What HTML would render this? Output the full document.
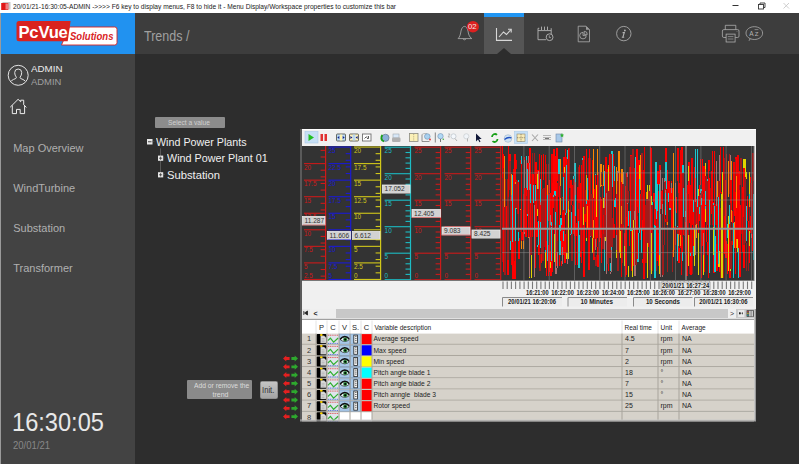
<!DOCTYPE html>
<html><head><meta charset="utf-8">
<style>
*{margin:0;padding:0;box-sizing:border-box}
html,body{width:800px;height:465px;overflow:hidden;background:#fff}
body{position:relative;font-family:"Liberation Sans",sans-serif}
.a{position:absolute}
.t{position:absolute;white-space:nowrap;line-height:1}
svg{position:absolute;left:0;top:0}
</style></head><body>
<div class="a" style="left:0;top:0;width:800px;height:13px;background:#fff"></div>
<div class="t" style="left:12.8px;top:2.77px;font-size:7px;color:#1a1a1a;font-weight:400;transform:scaleX(0.946);transform-origin:0 0;">20/01/21-16:30:05-ADMIN -&gt;&gt;&gt;&gt; F6 key to display menus, F8 to hide it - Menu Display/Workspace properties to customize this bar</div>
<div class="a" style="left:0;top:13px;width:799px;height:451px;background:#2d2d2d"></div>
<div class="a" style="left:0;top:13px;width:799px;height:41px;background:#3d3d3d"></div>
<div class="a" style="left:1px;top:13px;width:133.6px;height:41px;background:#2192f0"></div>
<div class="a" style="left:1px;top:54px;width:133.5px;height:410px;background:#434343"></div>
<div class="a" style="left:0;top:13px;width:1px;height:451px;background:#9a9a9a"></div>
<div class="a" style="left:484px;top:13px;width:40px;height:4px;background:#2196f3"></div>
<div class="a" style="left:484px;top:17px;width:40px;height:37px;background:#555"></div>
<div class="t" style="left:143.5px;top:28.81px;font-size:14.4px;color:#a0a0a0;font-weight:400;transform:scaleX(0.87);transform-origin:0 0;">Trends /</div>
<div class="t" style="left:31px;top:64.37px;font-size:9.6px;color:#ececec;font-weight:400;transform:scaleX(1.02);transform-origin:0 0;">ADMIN</div>
<div class="t" style="left:31px;top:77.47px;font-size:9.6px;color:#a0a0a0;font-weight:400;transform:scaleX(0.98);transform-origin:0 0;">ADMIN</div>
<div class="t" style="left:13.2px;top:142.89px;font-size:11px;color:#b0b0b0;font-weight:400;">Map Overview</div>
<div class="t" style="left:13.2px;top:182.89px;font-size:11px;color:#b0b0b0;font-weight:400;">WindTurbine</div>
<div class="t" style="left:13.2px;top:222.89px;font-size:11px;color:#b0b0b0;font-weight:400;">Substation</div>
<div class="t" style="left:13.2px;top:262.89px;font-size:11px;color:#b0b0b0;font-weight:400;">Transformer</div>
<div class="t" style="left:12.3px;top:409.84px;font-size:25px;color:#e8e8e8;font-weight:400;transform:scaleX(0.945);transform-origin:0 0;">16:30:05</div>
<div class="t" style="left:13px;top:439.87px;font-size:11.5px;color:#888;font-weight:400;transform:scaleX(0.83);transform-origin:0 0;">20/01/21</div>
<div class="a" style="left:154.5px;top:116.5px;width:70px;height:11.5px;background:#8c8c8c;border-radius:1px"></div>
<div class="t" style="left:168px;top:119.07px;font-size:7px;color:#d0d0d0;font-weight:400;transform:scaleX(0.955);transform-origin:0 0;">Select a value</div>
<div class="t" style="left:156px;top:136.69px;font-size:11px;color:#f0f0f0;font-weight:400;transform:scaleX(0.975);transform-origin:0 0;">Wind Power Plants</div>
<div class="t" style="left:167px;top:153.09px;font-size:11px;color:#f0f0f0;font-weight:400;transform:scaleX(0.98);transform-origin:0 0;">Wind Power Plant 01</div>
<div class="t" style="left:166.5px;top:169.69px;font-size:11px;color:#f0f0f0;font-weight:400;transform:scaleX(1.02);transform-origin:0 0;">Substation</div>
<div class="a" style="left:187px;top:380px;width:65px;height:19px;background:#8a8a8a;border-radius:1px"></div>
<div class="t" style="left:193.5px;top:382.07px;font-size:7px;color:#dcdcdc;font-weight:400;transform:scaleX(0.96);transform-origin:0 0;">Add or remove the</div>
<div class="t" style="left:212.5px;top:390.57px;font-size:7px;color:#dcdcdc;font-weight:400;">trend</div>
<div class="a" style="left:260px;top:380.5px;width:18px;height:18.5px;background:linear-gradient(#c4c4c4,#a4a4a4);border:1px solid #909090;border-radius:1.5px"></div>
<div class="t" style="left:261.5px;top:385.80px;font-size:8.5px;color:#333;font-weight:400;transform:scaleX(0.9);transform-origin:0 0;">Init.</div>
<div class="a" style="left:300px;top:129px;width:456px;height:292px;background:#f0f0f0"></div>
<div class="a" style="left:300px;top:129px;width:2px;height:292px;background:#5a5a5a"></div>
<div class="a" style="left:302px;top:146px;width:452px;height:135px;background:#333333"></div>
<div class="a" style="left:302px;top:320px;width:452px;height:100px;background:#d6d2ca"></div>
<svg width="800" height="465" viewBox="0 0 800 465"><line x1="325.6" y1="146" x2="325.6" y2="280.5" stroke="#cc1a1a" stroke-width="1.2"/><line x1="304" y1="279.45" x2="325.6" y2="279.45" stroke="#cc1a1a" stroke-width="1.1"/><line x1="320.6" y1="276.14" x2="325.6" y2="276.14" stroke="#cc1a1a" stroke-width="1.1"/><line x1="320.6" y1="269.52" x2="325.6" y2="269.52" stroke="#cc1a1a" stroke-width="1.1"/><line x1="304" y1="262.90" x2="325.6" y2="262.90" stroke="#cc1a1a" stroke-width="1.1"/><line x1="320.6" y1="256.28" x2="325.6" y2="256.28" stroke="#cc1a1a" stroke-width="1.1"/><line x1="320.6" y1="249.66" x2="325.6" y2="249.66" stroke="#cc1a1a" stroke-width="1.1"/><line x1="304" y1="246.35" x2="325.6" y2="246.35" stroke="#cc1a1a" stroke-width="1.1"/><line x1="320.6" y1="243.04" x2="325.6" y2="243.04" stroke="#cc1a1a" stroke-width="1.1"/><line x1="320.6" y1="236.42" x2="325.6" y2="236.42" stroke="#cc1a1a" stroke-width="1.1"/><line x1="304" y1="229.80" x2="325.6" y2="229.80" stroke="#cc1a1a" stroke-width="1.1"/><line x1="320.6" y1="223.18" x2="325.6" y2="223.18" stroke="#cc1a1a" stroke-width="1.1"/><line x1="320.6" y1="216.56" x2="325.6" y2="216.56" stroke="#cc1a1a" stroke-width="1.1"/><line x1="304" y1="213.25" x2="325.6" y2="213.25" stroke="#cc1a1a" stroke-width="1.1"/><line x1="320.6" y1="209.94" x2="325.6" y2="209.94" stroke="#cc1a1a" stroke-width="1.1"/><line x1="320.6" y1="203.32" x2="325.6" y2="203.32" stroke="#cc1a1a" stroke-width="1.1"/><line x1="304" y1="196.70" x2="325.6" y2="196.70" stroke="#cc1a1a" stroke-width="1.1"/><line x1="320.6" y1="190.08" x2="325.6" y2="190.08" stroke="#cc1a1a" stroke-width="1.1"/><line x1="320.6" y1="183.46" x2="325.6" y2="183.46" stroke="#cc1a1a" stroke-width="1.1"/><line x1="304" y1="180.15" x2="325.6" y2="180.15" stroke="#cc1a1a" stroke-width="1.1"/><line x1="320.6" y1="176.84" x2="325.6" y2="176.84" stroke="#cc1a1a" stroke-width="1.1"/><line x1="320.6" y1="170.22" x2="325.6" y2="170.22" stroke="#cc1a1a" stroke-width="1.1"/><line x1="304" y1="163.60" x2="325.6" y2="163.60" stroke="#cc1a1a" stroke-width="1.1"/><line x1="320.6" y1="156.98" x2="325.6" y2="156.98" stroke="#cc1a1a" stroke-width="1.1"/><line x1="320.6" y1="150.36" x2="325.6" y2="150.36" stroke="#cc1a1a" stroke-width="1.1"/><text x="304" y="169.50" fill="#cc1a1a" font-size="6.4" font-family="Liberation Sans">20</text><text x="304" y="186.05" fill="#cc1a1a" font-size="6.4" font-family="Liberation Sans">17.5</text><text x="304" y="202.60" fill="#cc1a1a" font-size="6.4" font-family="Liberation Sans">15</text><text x="304" y="219.15" fill="#cc1a1a" font-size="6.4" font-family="Liberation Sans">12.5</text><text x="304" y="235.70" fill="#cc1a1a" font-size="6.4" font-family="Liberation Sans">10</text><text x="304" y="252.25" fill="#cc1a1a" font-size="6.4" font-family="Liberation Sans">7.5</text><text x="304" y="268.80" fill="#cc1a1a" font-size="6.4" font-family="Liberation Sans">5</text><text x="304" y="278.00" fill="#cc1a1a" font-size="6.4" font-family="Liberation Sans">2.5</text><line x1="350.7" y1="146" x2="350.7" y2="280.5" stroke="#1a1ad4" stroke-width="1.2"/><line x1="328.5" y1="279.45" x2="350.7" y2="279.45" stroke="#1a1ad4" stroke-width="1.1"/><line x1="345.7" y1="272.83" x2="350.7" y2="272.83" stroke="#1a1ad4" stroke-width="1.1"/><line x1="345.7" y1="266.21" x2="350.7" y2="266.21" stroke="#1a1ad4" stroke-width="1.1"/><line x1="328.5" y1="262.90" x2="350.7" y2="262.90" stroke="#1a1ad4" stroke-width="1.1"/><line x1="345.7" y1="259.59" x2="350.7" y2="259.59" stroke="#1a1ad4" stroke-width="1.1"/><line x1="345.7" y1="252.97" x2="350.7" y2="252.97" stroke="#1a1ad4" stroke-width="1.1"/><line x1="328.5" y1="246.35" x2="350.7" y2="246.35" stroke="#1a1ad4" stroke-width="1.1"/><line x1="345.7" y1="239.73" x2="350.7" y2="239.73" stroke="#1a1ad4" stroke-width="1.1"/><line x1="345.7" y1="233.11" x2="350.7" y2="233.11" stroke="#1a1ad4" stroke-width="1.1"/><line x1="328.5" y1="229.80" x2="350.7" y2="229.80" stroke="#1a1ad4" stroke-width="1.1"/><line x1="345.7" y1="226.49" x2="350.7" y2="226.49" stroke="#1a1ad4" stroke-width="1.1"/><line x1="345.7" y1="219.87" x2="350.7" y2="219.87" stroke="#1a1ad4" stroke-width="1.1"/><line x1="328.5" y1="213.25" x2="350.7" y2="213.25" stroke="#1a1ad4" stroke-width="1.1"/><line x1="345.7" y1="206.63" x2="350.7" y2="206.63" stroke="#1a1ad4" stroke-width="1.1"/><line x1="345.7" y1="200.01" x2="350.7" y2="200.01" stroke="#1a1ad4" stroke-width="1.1"/><line x1="328.5" y1="196.70" x2="350.7" y2="196.70" stroke="#1a1ad4" stroke-width="1.1"/><line x1="345.7" y1="193.39" x2="350.7" y2="193.39" stroke="#1a1ad4" stroke-width="1.1"/><line x1="345.7" y1="186.77" x2="350.7" y2="186.77" stroke="#1a1ad4" stroke-width="1.1"/><line x1="328.5" y1="180.15" x2="350.7" y2="180.15" stroke="#1a1ad4" stroke-width="1.1"/><line x1="345.7" y1="173.53" x2="350.7" y2="173.53" stroke="#1a1ad4" stroke-width="1.1"/><line x1="345.7" y1="166.91" x2="350.7" y2="166.91" stroke="#1a1ad4" stroke-width="1.1"/><line x1="328.5" y1="163.60" x2="350.7" y2="163.60" stroke="#1a1ad4" stroke-width="1.1"/><line x1="345.7" y1="160.29" x2="350.7" y2="160.29" stroke="#1a1ad4" stroke-width="1.1"/><line x1="345.7" y1="153.67" x2="350.7" y2="153.67" stroke="#1a1ad4" stroke-width="1.1"/><line x1="328.5" y1="147.05" x2="350.7" y2="147.05" stroke="#1a1ad4" stroke-width="1.1"/><text x="328.5" y="152.95" fill="#1a1ad4" font-size="6.4" font-family="Liberation Sans">25</text><text x="328.5" y="169.50" fill="#1a1ad4" font-size="6.4" font-family="Liberation Sans">22.5</text><text x="328.5" y="186.05" fill="#1a1ad4" font-size="6.4" font-family="Liberation Sans">20</text><text x="328.5" y="202.60" fill="#1a1ad4" font-size="6.4" font-family="Liberation Sans">17.5</text><text x="328.5" y="219.15" fill="#1a1ad4" font-size="6.4" font-family="Liberation Sans">15</text><text x="328.5" y="235.70" fill="#1a1ad4" font-size="6.4" font-family="Liberation Sans">12.5</text><text x="328.5" y="252.25" fill="#1a1ad4" font-size="6.4" font-family="Liberation Sans">10</text><text x="328.5" y="268.80" fill="#1a1ad4" font-size="6.4" font-family="Liberation Sans">7.5</text><text x="328.5" y="278.00" fill="#1a1ad4" font-size="6.4" font-family="Liberation Sans">5</text><line x1="380.6" y1="146" x2="380.6" y2="280.5" stroke="#d2c81a" stroke-width="1.2"/><line x1="354" y1="279.45" x2="380.6" y2="279.45" stroke="#d2c81a" stroke-width="1.1"/><line x1="375.6" y1="272.83" x2="380.6" y2="272.83" stroke="#d2c81a" stroke-width="1.1"/><line x1="375.6" y1="266.21" x2="380.6" y2="266.21" stroke="#d2c81a" stroke-width="1.1"/><line x1="354" y1="262.90" x2="380.6" y2="262.90" stroke="#d2c81a" stroke-width="1.1"/><line x1="375.6" y1="259.59" x2="380.6" y2="259.59" stroke="#d2c81a" stroke-width="1.1"/><line x1="375.6" y1="252.97" x2="380.6" y2="252.97" stroke="#d2c81a" stroke-width="1.1"/><line x1="354" y1="246.35" x2="380.6" y2="246.35" stroke="#d2c81a" stroke-width="1.1"/><line x1="375.6" y1="239.73" x2="380.6" y2="239.73" stroke="#d2c81a" stroke-width="1.1"/><line x1="375.6" y1="233.11" x2="380.6" y2="233.11" stroke="#d2c81a" stroke-width="1.1"/><line x1="354" y1="229.80" x2="380.6" y2="229.80" stroke="#d2c81a" stroke-width="1.1"/><line x1="375.6" y1="226.49" x2="380.6" y2="226.49" stroke="#d2c81a" stroke-width="1.1"/><line x1="375.6" y1="219.87" x2="380.6" y2="219.87" stroke="#d2c81a" stroke-width="1.1"/><line x1="354" y1="213.25" x2="380.6" y2="213.25" stroke="#d2c81a" stroke-width="1.1"/><line x1="375.6" y1="206.63" x2="380.6" y2="206.63" stroke="#d2c81a" stroke-width="1.1"/><line x1="375.6" y1="200.01" x2="380.6" y2="200.01" stroke="#d2c81a" stroke-width="1.1"/><line x1="354" y1="196.70" x2="380.6" y2="196.70" stroke="#d2c81a" stroke-width="1.1"/><line x1="375.6" y1="193.39" x2="380.6" y2="193.39" stroke="#d2c81a" stroke-width="1.1"/><line x1="375.6" y1="186.77" x2="380.6" y2="186.77" stroke="#d2c81a" stroke-width="1.1"/><line x1="354" y1="180.15" x2="380.6" y2="180.15" stroke="#d2c81a" stroke-width="1.1"/><line x1="375.6" y1="173.53" x2="380.6" y2="173.53" stroke="#d2c81a" stroke-width="1.1"/><line x1="375.6" y1="166.91" x2="380.6" y2="166.91" stroke="#d2c81a" stroke-width="1.1"/><line x1="354" y1="163.60" x2="380.6" y2="163.60" stroke="#d2c81a" stroke-width="1.1"/><line x1="375.6" y1="160.29" x2="380.6" y2="160.29" stroke="#d2c81a" stroke-width="1.1"/><line x1="375.6" y1="153.67" x2="380.6" y2="153.67" stroke="#d2c81a" stroke-width="1.1"/><line x1="354" y1="147.05" x2="380.6" y2="147.05" stroke="#d2c81a" stroke-width="1.1"/><text x="354" y="152.95" fill="#d2c81a" font-size="6.4" font-family="Liberation Sans">20</text><text x="354" y="169.50" fill="#d2c81a" font-size="6.4" font-family="Liberation Sans">17.5</text><text x="354" y="186.05" fill="#d2c81a" font-size="6.4" font-family="Liberation Sans">15</text><text x="354" y="202.60" fill="#d2c81a" font-size="6.4" font-family="Liberation Sans">12.5</text><text x="354" y="219.15" fill="#d2c81a" font-size="6.4" font-family="Liberation Sans">10</text><text x="354" y="235.70" fill="#d2c81a" font-size="6.4" font-family="Liberation Sans">7.5</text><text x="354" y="252.25" fill="#d2c81a" font-size="6.4" font-family="Liberation Sans">5</text><text x="354" y="268.80" fill="#d2c81a" font-size="6.4" font-family="Liberation Sans">2.5</text><text x="354" y="278.00" fill="#d2c81a" font-size="6.4" font-family="Liberation Sans">0</text><line x1="410.5" y1="146" x2="410.5" y2="280.5" stroke="#1cbcc4" stroke-width="1.2"/><line x1="384.6" y1="279.70" x2="410.5" y2="279.70" stroke="#1cbcc4" stroke-width="1.1"/><line x1="405.5" y1="274.40" x2="410.5" y2="274.40" stroke="#1cbcc4" stroke-width="1.1"/><line x1="405.5" y1="269.10" x2="410.5" y2="269.10" stroke="#1cbcc4" stroke-width="1.1"/><line x1="405.5" y1="263.80" x2="410.5" y2="263.80" stroke="#1cbcc4" stroke-width="1.1"/><line x1="405.5" y1="258.50" x2="410.5" y2="258.50" stroke="#1cbcc4" stroke-width="1.1"/><line x1="384.6" y1="253.20" x2="410.5" y2="253.20" stroke="#1cbcc4" stroke-width="1.1"/><line x1="405.5" y1="247.90" x2="410.5" y2="247.90" stroke="#1cbcc4" stroke-width="1.1"/><line x1="405.5" y1="242.60" x2="410.5" y2="242.60" stroke="#1cbcc4" stroke-width="1.1"/><line x1="405.5" y1="237.30" x2="410.5" y2="237.30" stroke="#1cbcc4" stroke-width="1.1"/><line x1="405.5" y1="232.00" x2="410.5" y2="232.00" stroke="#1cbcc4" stroke-width="1.1"/><line x1="384.6" y1="226.70" x2="410.5" y2="226.70" stroke="#1cbcc4" stroke-width="1.1"/><line x1="405.5" y1="221.40" x2="410.5" y2="221.40" stroke="#1cbcc4" stroke-width="1.1"/><line x1="405.5" y1="216.10" x2="410.5" y2="216.10" stroke="#1cbcc4" stroke-width="1.1"/><line x1="405.5" y1="210.80" x2="410.5" y2="210.80" stroke="#1cbcc4" stroke-width="1.1"/><line x1="405.5" y1="205.50" x2="410.5" y2="205.50" stroke="#1cbcc4" stroke-width="1.1"/><line x1="384.6" y1="200.20" x2="410.5" y2="200.20" stroke="#1cbcc4" stroke-width="1.1"/><line x1="405.5" y1="194.90" x2="410.5" y2="194.90" stroke="#1cbcc4" stroke-width="1.1"/><line x1="405.5" y1="189.60" x2="410.5" y2="189.60" stroke="#1cbcc4" stroke-width="1.1"/><line x1="405.5" y1="184.30" x2="410.5" y2="184.30" stroke="#1cbcc4" stroke-width="1.1"/><line x1="405.5" y1="179.00" x2="410.5" y2="179.00" stroke="#1cbcc4" stroke-width="1.1"/><line x1="384.6" y1="173.70" x2="410.5" y2="173.70" stroke="#1cbcc4" stroke-width="1.1"/><line x1="405.5" y1="168.40" x2="410.5" y2="168.40" stroke="#1cbcc4" stroke-width="1.1"/><line x1="405.5" y1="163.10" x2="410.5" y2="163.10" stroke="#1cbcc4" stroke-width="1.1"/><line x1="405.5" y1="157.80" x2="410.5" y2="157.80" stroke="#1cbcc4" stroke-width="1.1"/><line x1="405.5" y1="152.50" x2="410.5" y2="152.50" stroke="#1cbcc4" stroke-width="1.1"/><line x1="384.6" y1="147.20" x2="410.5" y2="147.20" stroke="#1cbcc4" stroke-width="1.1"/><text x="384.6" y="153.10" fill="#1cbcc4" font-size="6.4" font-family="Liberation Sans">25</text><text x="384.6" y="179.60" fill="#1cbcc4" font-size="6.4" font-family="Liberation Sans">20</text><text x="384.6" y="206.10" fill="#1cbcc4" font-size="6.4" font-family="Liberation Sans">15</text><text x="384.6" y="232.60" fill="#1cbcc4" font-size="6.4" font-family="Liberation Sans">10</text><text x="384.6" y="259.10" fill="#1cbcc4" font-size="6.4" font-family="Liberation Sans">5</text><text x="384.6" y="278.00" fill="#1cbcc4" font-size="6.4" font-family="Liberation Sans">0</text><line x1="440.6" y1="146" x2="440.6" y2="280.5" stroke="#cc1a1a" stroke-width="1.2"/><line x1="414.5" y1="279.70" x2="440.6" y2="279.70" stroke="#cc1a1a" stroke-width="1.1"/><line x1="435.6" y1="274.40" x2="440.6" y2="274.40" stroke="#cc1a1a" stroke-width="1.1"/><line x1="435.6" y1="269.10" x2="440.6" y2="269.10" stroke="#cc1a1a" stroke-width="1.1"/><line x1="435.6" y1="263.80" x2="440.6" y2="263.80" stroke="#cc1a1a" stroke-width="1.1"/><line x1="435.6" y1="258.50" x2="440.6" y2="258.50" stroke="#cc1a1a" stroke-width="1.1"/><line x1="414.5" y1="253.20" x2="440.6" y2="253.20" stroke="#cc1a1a" stroke-width="1.1"/><line x1="435.6" y1="247.90" x2="440.6" y2="247.90" stroke="#cc1a1a" stroke-width="1.1"/><line x1="435.6" y1="242.60" x2="440.6" y2="242.60" stroke="#cc1a1a" stroke-width="1.1"/><line x1="435.6" y1="237.30" x2="440.6" y2="237.30" stroke="#cc1a1a" stroke-width="1.1"/><line x1="435.6" y1="232.00" x2="440.6" y2="232.00" stroke="#cc1a1a" stroke-width="1.1"/><line x1="414.5" y1="226.70" x2="440.6" y2="226.70" stroke="#cc1a1a" stroke-width="1.1"/><line x1="435.6" y1="221.40" x2="440.6" y2="221.40" stroke="#cc1a1a" stroke-width="1.1"/><line x1="435.6" y1="216.10" x2="440.6" y2="216.10" stroke="#cc1a1a" stroke-width="1.1"/><line x1="435.6" y1="210.80" x2="440.6" y2="210.80" stroke="#cc1a1a" stroke-width="1.1"/><line x1="435.6" y1="205.50" x2="440.6" y2="205.50" stroke="#cc1a1a" stroke-width="1.1"/><line x1="414.5" y1="200.20" x2="440.6" y2="200.20" stroke="#cc1a1a" stroke-width="1.1"/><line x1="435.6" y1="194.90" x2="440.6" y2="194.90" stroke="#cc1a1a" stroke-width="1.1"/><line x1="435.6" y1="189.60" x2="440.6" y2="189.60" stroke="#cc1a1a" stroke-width="1.1"/><line x1="435.6" y1="184.30" x2="440.6" y2="184.30" stroke="#cc1a1a" stroke-width="1.1"/><line x1="435.6" y1="179.00" x2="440.6" y2="179.00" stroke="#cc1a1a" stroke-width="1.1"/><line x1="414.5" y1="173.70" x2="440.6" y2="173.70" stroke="#cc1a1a" stroke-width="1.1"/><line x1="435.6" y1="168.40" x2="440.6" y2="168.40" stroke="#cc1a1a" stroke-width="1.1"/><line x1="435.6" y1="163.10" x2="440.6" y2="163.10" stroke="#cc1a1a" stroke-width="1.1"/><line x1="435.6" y1="157.80" x2="440.6" y2="157.80" stroke="#cc1a1a" stroke-width="1.1"/><line x1="435.6" y1="152.50" x2="440.6" y2="152.50" stroke="#cc1a1a" stroke-width="1.1"/><line x1="414.5" y1="147.20" x2="440.6" y2="147.20" stroke="#cc1a1a" stroke-width="1.1"/><text x="414.5" y="153.10" fill="#cc1a1a" font-size="6.4" font-family="Liberation Sans">25</text><text x="414.5" y="179.60" fill="#cc1a1a" font-size="6.4" font-family="Liberation Sans">20</text><text x="414.5" y="206.10" fill="#cc1a1a" font-size="6.4" font-family="Liberation Sans">15</text><text x="414.5" y="232.60" fill="#cc1a1a" font-size="6.4" font-family="Liberation Sans">10</text><text x="414.5" y="259.10" fill="#cc1a1a" font-size="6.4" font-family="Liberation Sans">5</text><text x="414.5" y="278.00" fill="#cc1a1a" font-size="6.4" font-family="Liberation Sans">0</text><line x1="470.7" y1="146" x2="470.7" y2="280.5" stroke="#cc1a1a" stroke-width="1.2"/><line x1="444.5" y1="279.70" x2="470.7" y2="279.70" stroke="#cc1a1a" stroke-width="1.1"/><line x1="465.7" y1="274.40" x2="470.7" y2="274.40" stroke="#cc1a1a" stroke-width="1.1"/><line x1="465.7" y1="269.10" x2="470.7" y2="269.10" stroke="#cc1a1a" stroke-width="1.1"/><line x1="465.7" y1="263.80" x2="470.7" y2="263.80" stroke="#cc1a1a" stroke-width="1.1"/><line x1="465.7" y1="258.50" x2="470.7" y2="258.50" stroke="#cc1a1a" stroke-width="1.1"/><line x1="444.5" y1="253.20" x2="470.7" y2="253.20" stroke="#cc1a1a" stroke-width="1.1"/><line x1="465.7" y1="247.90" x2="470.7" y2="247.90" stroke="#cc1a1a" stroke-width="1.1"/><line x1="465.7" y1="242.60" x2="470.7" y2="242.60" stroke="#cc1a1a" stroke-width="1.1"/><line x1="465.7" y1="237.30" x2="470.7" y2="237.30" stroke="#cc1a1a" stroke-width="1.1"/><line x1="465.7" y1="232.00" x2="470.7" y2="232.00" stroke="#cc1a1a" stroke-width="1.1"/><line x1="444.5" y1="226.70" x2="470.7" y2="226.70" stroke="#cc1a1a" stroke-width="1.1"/><line x1="465.7" y1="221.40" x2="470.7" y2="221.40" stroke="#cc1a1a" stroke-width="1.1"/><line x1="465.7" y1="216.10" x2="470.7" y2="216.10" stroke="#cc1a1a" stroke-width="1.1"/><line x1="465.7" y1="210.80" x2="470.7" y2="210.80" stroke="#cc1a1a" stroke-width="1.1"/><line x1="465.7" y1="205.50" x2="470.7" y2="205.50" stroke="#cc1a1a" stroke-width="1.1"/><line x1="444.5" y1="200.20" x2="470.7" y2="200.20" stroke="#cc1a1a" stroke-width="1.1"/><line x1="465.7" y1="194.90" x2="470.7" y2="194.90" stroke="#cc1a1a" stroke-width="1.1"/><line x1="465.7" y1="189.60" x2="470.7" y2="189.60" stroke="#cc1a1a" stroke-width="1.1"/><line x1="465.7" y1="184.30" x2="470.7" y2="184.30" stroke="#cc1a1a" stroke-width="1.1"/><line x1="465.7" y1="179.00" x2="470.7" y2="179.00" stroke="#cc1a1a" stroke-width="1.1"/><line x1="444.5" y1="173.70" x2="470.7" y2="173.70" stroke="#cc1a1a" stroke-width="1.1"/><line x1="465.7" y1="168.40" x2="470.7" y2="168.40" stroke="#cc1a1a" stroke-width="1.1"/><line x1="465.7" y1="163.10" x2="470.7" y2="163.10" stroke="#cc1a1a" stroke-width="1.1"/><line x1="465.7" y1="157.80" x2="470.7" y2="157.80" stroke="#cc1a1a" stroke-width="1.1"/><line x1="465.7" y1="152.50" x2="470.7" y2="152.50" stroke="#cc1a1a" stroke-width="1.1"/><line x1="444.5" y1="147.20" x2="470.7" y2="147.20" stroke="#cc1a1a" stroke-width="1.1"/><text x="444.5" y="153.10" fill="#cc1a1a" font-size="6.4" font-family="Liberation Sans">25</text><text x="444.5" y="179.60" fill="#cc1a1a" font-size="6.4" font-family="Liberation Sans">20</text><text x="444.5" y="206.10" fill="#cc1a1a" font-size="6.4" font-family="Liberation Sans">15</text><text x="444.5" y="232.60" fill="#cc1a1a" font-size="6.4" font-family="Liberation Sans">10</text><text x="444.5" y="259.10" fill="#cc1a1a" font-size="6.4" font-family="Liberation Sans">5</text><text x="444.5" y="278.00" fill="#cc1a1a" font-size="6.4" font-family="Liberation Sans">0</text><line x1="500.7" y1="146" x2="500.7" y2="280.5" stroke="#cc1a1a" stroke-width="1.2"/><line x1="474.5" y1="279.70" x2="500.7" y2="279.70" stroke="#cc1a1a" stroke-width="1.1"/><line x1="495.7" y1="274.40" x2="500.7" y2="274.40" stroke="#cc1a1a" stroke-width="1.1"/><line x1="495.7" y1="269.10" x2="500.7" y2="269.10" stroke="#cc1a1a" stroke-width="1.1"/><line x1="495.7" y1="263.80" x2="500.7" y2="263.80" stroke="#cc1a1a" stroke-width="1.1"/><line x1="495.7" y1="258.50" x2="500.7" y2="258.50" stroke="#cc1a1a" stroke-width="1.1"/><line x1="474.5" y1="253.20" x2="500.7" y2="253.20" stroke="#cc1a1a" stroke-width="1.1"/><line x1="495.7" y1="247.90" x2="500.7" y2="247.90" stroke="#cc1a1a" stroke-width="1.1"/><line x1="495.7" y1="242.60" x2="500.7" y2="242.60" stroke="#cc1a1a" stroke-width="1.1"/><line x1="495.7" y1="237.30" x2="500.7" y2="237.30" stroke="#cc1a1a" stroke-width="1.1"/><line x1="495.7" y1="232.00" x2="500.7" y2="232.00" stroke="#cc1a1a" stroke-width="1.1"/><line x1="474.5" y1="226.70" x2="500.7" y2="226.70" stroke="#cc1a1a" stroke-width="1.1"/><line x1="495.7" y1="221.40" x2="500.7" y2="221.40" stroke="#cc1a1a" stroke-width="1.1"/><line x1="495.7" y1="216.10" x2="500.7" y2="216.10" stroke="#cc1a1a" stroke-width="1.1"/><line x1="495.7" y1="210.80" x2="500.7" y2="210.80" stroke="#cc1a1a" stroke-width="1.1"/><line x1="495.7" y1="205.50" x2="500.7" y2="205.50" stroke="#cc1a1a" stroke-width="1.1"/><line x1="474.5" y1="200.20" x2="500.7" y2="200.20" stroke="#cc1a1a" stroke-width="1.1"/><line x1="495.7" y1="194.90" x2="500.7" y2="194.90" stroke="#cc1a1a" stroke-width="1.1"/><line x1="495.7" y1="189.60" x2="500.7" y2="189.60" stroke="#cc1a1a" stroke-width="1.1"/><line x1="495.7" y1="184.30" x2="500.7" y2="184.30" stroke="#cc1a1a" stroke-width="1.1"/><line x1="495.7" y1="179.00" x2="500.7" y2="179.00" stroke="#cc1a1a" stroke-width="1.1"/><line x1="474.5" y1="173.70" x2="500.7" y2="173.70" stroke="#cc1a1a" stroke-width="1.1"/><line x1="495.7" y1="168.40" x2="500.7" y2="168.40" stroke="#cc1a1a" stroke-width="1.1"/><line x1="495.7" y1="163.10" x2="500.7" y2="163.10" stroke="#cc1a1a" stroke-width="1.1"/><line x1="495.7" y1="157.80" x2="500.7" y2="157.80" stroke="#cc1a1a" stroke-width="1.1"/><line x1="495.7" y1="152.50" x2="500.7" y2="152.50" stroke="#cc1a1a" stroke-width="1.1"/><line x1="474.5" y1="147.20" x2="500.7" y2="147.20" stroke="#cc1a1a" stroke-width="1.1"/><text x="474.5" y="153.10" fill="#cc1a1a" font-size="6.4" font-family="Liberation Sans">25</text><text x="474.5" y="179.60" fill="#cc1a1a" font-size="6.4" font-family="Liberation Sans">20</text><text x="474.5" y="206.10" fill="#cc1a1a" font-size="6.4" font-family="Liberation Sans">15</text><text x="474.5" y="232.60" fill="#cc1a1a" font-size="6.4" font-family="Liberation Sans">10</text><text x="474.5" y="259.10" fill="#cc1a1a" font-size="6.4" font-family="Liberation Sans">5</text><text x="474.5" y="278.00" fill="#cc1a1a" font-size="6.4" font-family="Liberation Sans">0</text><path d="M503.5,220V224M504.5,224V230M506.5,206V230M507.5,206V275M508.5,167V275M509.5,154V167M510.5,154V179M511.5,179V215M512.5,215V234M513.5,234V279M515.5,180V279M516.5,180V199M518.5,199V259M519.5,238V259M521.5,238V240M522.5,232V240M524.5,157V232M526.5,157V206M527.5,163V206M528.5,163V188M529.5,188V253M530.5,174V253M531.5,174V231M532.5,174V231M533.5,174V190M534.5,190V191M535.5,191V195M536.5,195V210M537.5,170V210M538.5,170V255M539.5,255V258M540.5,258V263M541.5,155V263M543.5,155V180M545.5,180V206M546.5,206V240M547.5,221V240M548.5,180V221M549.5,180V193M550.5,193V276M551.5,224V276M552.5,208V224M553.5,149V208M554.5,149V243M555.5,156V243M556.5,156V266M557.5,252V266M559.5,252V266M561.5,261V266M562.5,197V261M563.5,157V197M564.5,157V263M565.5,234V263M566.5,157V234M568.5,157V210M569.5,210V212M570.5,180V212M571.5,180V205M572.5,205V234M573.5,189V234M574.5,189V228M577.5,188V228M578.5,188V257M580.5,183V257M581.5,183V183M582.5,183V220M583.5,220V277M584.5,206V277M585.5,206V222M586.5,149V222M587.5,149V149M589.5,149V191M590.5,191V233M593.5,189V233M594.5,189V241M595.5,215V241M596.5,215V247M597.5,247V267M598.5,242V267M599.5,229V242M601.5,229V263M604.5,173V263M605.5,173V231M606.5,231V271M608.5,189V271M611.5,189V212M613.5,204V212M615.5,204V208M616.5,208V242M618.5,212V242M620.5,200V212M621.5,200V216M623.5,216V228M625.5,228V275M626.5,173V275M627.5,173V226M628.5,215V226M629.5,215V221M630.5,155V221M631.5,155V271M632.5,163V271M633.5,163V266M634.5,200V266M636.5,149V200M637.5,149V213M638.5,160V213M639.5,160V197M640.5,197V204M641.5,192V204M642.5,192V231M643.5,227V231M645.5,227V254M647.5,222V254M650.5,212V222M651.5,202V212M653.5,193V202M654.5,193V267M656.5,247V267M657.5,171V247M658.5,171V185M659.5,165V185M660.5,165V268M662.5,240V268M664.5,215V240M665.5,148V215M666.5,148V170M667.5,170V200M668.5,181V200M671.5,181V230M672.5,213V230M675.5,213V245M678.5,245V263M679.5,248V263M680.5,155V248M681.5,147V155M682.5,147V229M683.5,229V235M684.5,222V235M685.5,222V255M686.5,255V276M687.5,244V276M688.5,162V244M689.5,162V223M690.5,223V275M691.5,231V275M693.5,231V247M694.5,167V247M695.5,167V220M696.5,202V220M697.5,195V202M698.5,195V221M699.5,185V221M700.5,159V185M702.5,159V246M703.5,246V272M704.5,203V272M705.5,178V203M706.5,178V242M707.5,242V255M708.5,218V255M709.5,189V218M710.5,189V207M711.5,202V207M713.5,202V273M714.5,213V273M716.5,210V213M717.5,210V230M719.5,230V272M721.5,192V272M722.5,187V192M723.5,187V219M724.5,192V219M725.5,192V258M726.5,241V258M728.5,217V241M729.5,217V278M730.5,245V278M732.5,211V245M733.5,211V216M734.5,203V216M735.5,157V203M736.5,157V238M737.5,218V238M738.5,218V231M742.5,187V231M743.5,187V268M744.5,194V268M745.5,194V196M747.5,196V221M748.5,221V263M749.5,216V263M750.5,216V233M752.5,233V251M753.5,251V255" fill="none" stroke="#ff0000" stroke-width="1" shape-rendering="crispEdges"/><path d="M504.5,198V232M529.5,232V278M531.5,194V278M533.5,194V197M535.5,197V216M537.5,174V216M538.5,174V226M539.5,177V226M545.5,177V268M550.5,262V268M554.5,234V262M555.5,203V234M559.5,185V203M564.5,167V185M566.5,167V259M568.5,201V259M578.5,175V201M581.5,175V188M583.5,188V225M586.5,225V241M589.5,210V241M592.5,210V253M593.5,185V253M596.5,185V217M597.5,217V217M603.5,198V217M605.5,198V241M606.5,166V241M608.5,166V203M616.5,203V258M620.5,213V258M621.5,213V233M624.5,233V266M628.5,266V277M632.5,230V277M633.5,201V230M639.5,165V201M644.5,165V278M647.5,185V278M649.5,185V257M650.5,157V257M651.5,157V274M659.5,187V274M662.5,182V187M666.5,166V182M688.5,166V266M694.5,210V266M696.5,210V216M697.5,189V216M698.5,189V275M703.5,222V275M705.5,163V222M708.5,163V188M709.5,188V255M713.5,227V255M718.5,227V267M719.5,194V267M721.5,194V278M722.5,172V278M724.5,172V216M728.5,216V271M730.5,214V271M731.5,206V214M737.5,206V252M738.5,159V252M743.5,159V185M744.5,159V185M745.5,159V179M746.5,172V179M749.5,172V246M753.5,232V246" fill="none" stroke="#e0d400" stroke-width="1" shape-rendering="crispEdges"/><path d="M508.5,168V242M510.5,168V250M512.5,175V250M515.5,175V241M518.5,180V241M521.5,156V180M526.5,156V169M527.5,169V216M528.5,158V216M530.5,158V203M533.5,185V203M535.5,185V247M537.5,245V247M538.5,215V245M539.5,179V215M540.5,179V248M542.5,199V248M545.5,199V252M546.5,193V252M547.5,193V261M551.5,197V261M553.5,195V197M554.5,191V195M555.5,191V257M557.5,197V257M558.5,159V197M559.5,159V255M560.5,218V255M561.5,218V242M563.5,177V242M565.5,177V215M566.5,165V215M567.5,150V165M568.5,150V191M570.5,191V235M571.5,212V235M573.5,176V212M574.5,163V176M575.5,163V221M578.5,221V268M579.5,235V268M582.5,158V235M584.5,158V193M586.5,193V204M587.5,178V204M588.5,178V184M593.5,174V184M595.5,174V224M597.5,171V224M600.5,171V171M604.5,171V271M610.5,263V271M611.5,151V263M612.5,151V187M613.5,166V187M614.5,166V207M615.5,198V207M616.5,198V232M622.5,226V232M628.5,211V226M630.5,211V231M631.5,179V231M633.5,157V179M635.5,157V249M637.5,249V262M638.5,233V262M639.5,179V233M641.5,179V253M649.5,206V253M650.5,206V248M652.5,202V248M654.5,202V278M655.5,162V278M656.5,162V261M657.5,184V261M659.5,184V255M660.5,238V255M662.5,219V238M664.5,215V219M665.5,162V215M666.5,162V193M668.5,193V202M669.5,202V210M670.5,190V210M672.5,190V210M675.5,210V226M677.5,226V261M682.5,165V261M683.5,165V217M685.5,211V217M690.5,211V256M693.5,200V256M695.5,149V200M697.5,149V214M699.5,193V214M700.5,189V193M701.5,189V209M705.5,179V209M707.5,179V200M708.5,200V273M709.5,189V273M711.5,189V203M713.5,203V205M714.5,205V272M715.5,236V272M716.5,196V236M718.5,196V264M723.5,238V264M727.5,224V238M729.5,205V224M733.5,205V278M735.5,278V278M738.5,211V278M739.5,211V232M745.5,232V241M746.5,206V241M749.5,194V206M753.5,194V260" fill="none" stroke="#18c8d0" stroke-width="1" shape-rendering="crispEdges"/><path d="M504.5,156V220M508.5,156V229M511.5,174V229M515.5,174V204M516.5,204V209M520.5,209V224M521.5,224V249M523.5,238V249M528.5,203V238M536.5,185V203M547.5,185V195M552.5,195V215M560.5,159V215M568.5,159V209M582.5,200V209M584.5,175V200M586.5,175V201M587.5,201V229M593.5,149V229M597.5,149V218M598.5,187V218M600.5,164V187M601.5,164V186M603.5,165V186M608.5,165V167M616.5,167V249M618.5,151V249M619.5,151V253M621.5,169V253M622.5,169V190M640.5,155V190M644.5,155V192M646.5,192V211M647.5,211V211M660.5,181V211M667.5,181V257M673.5,153V257M678.5,153V246M680.5,202V246M684.5,202V205M689.5,200V205M690.5,200V235M692.5,230V235M695.5,230V238M696.5,209V238M697.5,209V216M703.5,169V216M705.5,169V181M717.5,181V233M719.5,197V233M728.5,161V197M731.5,161V222M734.5,222V248M736.5,176V248M737.5,176V227M738.5,224V227M749.5,199V224M752.5,183V199" fill="none" stroke="#ff8800" stroke-width="1" shape-rendering="crispEdges"/><path d="M502.5,238V260M511.5,195V260M523.5,195V234M524.5,160V234M526.5,160V188M528.5,156V188M529.5,156V277M534.5,171V277M538.5,171V202M540.5,202V221M543.5,215V221M550.5,215V225M555.5,225V274M556.5,268V274M557.5,247V268M562.5,247V264M567.5,182V264M575.5,182V195M584.5,189V195M589.5,179V189M590.5,179V237M595.5,237V250M604.5,197V250M605.5,166V197M606.5,166V274M610.5,272V274M611.5,250V272M616.5,214V250M617.5,171V214M618.5,171V217M623.5,172V217M627.5,172V204M634.5,204V276M635.5,200V276M636.5,200V207M637.5,207V214M641.5,170V214M660.5,170V277M662.5,178V277M664.5,178V184M665.5,184V193M671.5,183V193M675.5,183V211M680.5,178V211M695.5,178V255M703.5,187V255M706.5,187V192M712.5,161V192M716.5,161V247M719.5,155V247M730.5,155V215M737.5,215V238M751.5,218V238" fill="none" stroke="#a87070" stroke-width="1" shape-rendering="crispEdges"/><path d="M502.5,154V198M503.5,154V272M505.5,193V272M507.5,193V242M512.5,242V279M514.5,154V279M515.5,154V182M518.5,182V232M521.5,232V241M523.5,210V241M524.5,210V212M526.5,212V237M528.5,163V237M529.5,148V163M530.5,148V184M535.5,162V184M536.5,162V237M537.5,222V237M540.5,205V222M541.5,201V205M542.5,201V207M546.5,207V276M548.5,245V276M549.5,245V272M552.5,176V272M556.5,148V176M557.5,148V181M559.5,181V225M561.5,225V255M563.5,241V255M567.5,221V241M570.5,189V221M573.5,189V216M575.5,216V265M577.5,202V265M578.5,202V207M583.5,156V207M584.5,156V238M586.5,206V238M587.5,200V206M588.5,200V270M589.5,160V270M592.5,160V238M593.5,238V260M594.5,239V260M595.5,175V239M597.5,175V238M600.5,197V238M602.5,197V230M605.5,207V230M608.5,207V209M609.5,154V209M613.5,154V235M616.5,194V235M617.5,194V237M618.5,184V237M620.5,182V184M621.5,182V206M622.5,206V233M624.5,233V246M629.5,211V246M634.5,168V211M637.5,168V259M642.5,259V263M646.5,247V263M648.5,215V247M650.5,148V215M651.5,148V196M654.5,196V225M656.5,225V266M658.5,205V266M661.5,204V205M662.5,190V204M665.5,181V190M669.5,181V208M670.5,188V208M672.5,188V213M676.5,197V213M678.5,171V197M681.5,171V252M682.5,181V252M688.5,181V212M689.5,197V212M691.5,197V236M692.5,236V246M693.5,212V246M696.5,199V212M698.5,199V233M703.5,166V233M704.5,166V206M705.5,205V206M708.5,178V205M709.5,178V200M710.5,196V200M711.5,196V214M712.5,151V214M714.5,151V206M716.5,206V271M717.5,218V271M720.5,215V218M724.5,215V254M725.5,244V254M727.5,244V274M735.5,192V274M737.5,183V192M738.5,171V183M739.5,171V277M740.5,205V277M742.5,191V205M743.5,168V191M744.5,168V231M745.5,177V231M750.5,177V193" fill="none" stroke="#ff0000" stroke-width="1" shape-rendering="crispEdges"/><path d="M502.5,168V262M503.5,168V207M504.5,207V275M505.5,179V275M507.5,179V260M508.5,190V260M509.5,161V190M510.5,161V241M511.5,239V241M513.5,239V261M514.5,184V261M515.5,184V208M516.5,181V208M517.5,181V214M518.5,214V232M520.5,210V232M522.5,210V210M523.5,194V210M525.5,194V196M526.5,196V214M527.5,190V214M529.5,190V237M530.5,237V255M531.5,174V255M532.5,153V174M534.5,153V205M535.5,205V209M537.5,189V209M538.5,189V221M539.5,221V271M540.5,254V271M541.5,189V254M542.5,189V261M543.5,188V261M544.5,188V247M545.5,241V247M546.5,164V241M548.5,164V194M549.5,194V251M550.5,226V251M551.5,226V227M554.5,196V227M555.5,196V212M556.5,212V252M557.5,197V252M558.5,174V197M559.5,174V186M560.5,186V198M562.5,198V212M564.5,173V212M565.5,173V213M566.5,213V253M567.5,159V253M568.5,148V159M569.5,148V188M570.5,188V234M571.5,234V261M572.5,206V261M573.5,179V206M574.5,179V223M577.5,209V223M578.5,167V209M579.5,167V228M580.5,228V251M582.5,160V251M584.5,160V214M585.5,190V214M588.5,158V190M590.5,158V236M591.5,194V236M592.5,194V198M593.5,198V220M594.5,220V257M595.5,257V266M596.5,255V266M598.5,172V255M601.5,172V185M602.5,185V249M603.5,208V249M604.5,208V237M605.5,193V237M606.5,172V193M607.5,172V264M608.5,191V264M609.5,191V258M610.5,154V258M611.5,154V247M612.5,218V247M613.5,200V218M614.5,181V200M617.5,181V271M618.5,173V271M620.5,173V231M621.5,231V263M622.5,184V263M623.5,184V225M625.5,217V225M626.5,177V217M627.5,177V203M628.5,191V203M629.5,167V191M630.5,156V167M631.5,156V228M632.5,149V228M633.5,149V220M634.5,220V229M635.5,229V265M636.5,207V265M637.5,207V216M640.5,216V228M641.5,153V228M642.5,153V220M643.5,220V229M644.5,205V229M645.5,205V263M646.5,199V263M647.5,199V243M648.5,191V243M649.5,191V270M650.5,209V270M651.5,205V209M652.5,205V271M656.5,219V271M657.5,219V233M658.5,209V233M660.5,209V214M662.5,214V275M663.5,245V275M664.5,182V245M665.5,182V189M666.5,189V225M667.5,225V272M672.5,250V272M674.5,227V250M677.5,227V234M678.5,193V234M680.5,193V207M681.5,207V237M682.5,173V237M683.5,173V188M684.5,188V236M685.5,227V236M686.5,193V227M687.5,193V194M688.5,194V235M689.5,235V274M692.5,229V274M694.5,202V229M695.5,202V225M697.5,207V225M699.5,191V207M701.5,191V198M702.5,194V198M703.5,191V194M705.5,176V191M706.5,176V225M707.5,181V225M708.5,181V188M710.5,188V225M712.5,204V225M715.5,204V225M716.5,225V244M717.5,197V244M718.5,181V197M719.5,181V208M720.5,208V278M723.5,158V278M724.5,158V216M725.5,216V216M726.5,154V216M729.5,154V194M730.5,194V269M731.5,241V269M732.5,223V241M733.5,183V223M734.5,183V192M735.5,159V192M737.5,159V224M738.5,190V224M739.5,185V190M740.5,158V185M741.5,158V234M742.5,217V234M743.5,217V245M744.5,177V245M745.5,177V243M746.5,243V271M748.5,231V271M749.5,207V231M750.5,183V207M751.5,183V234M752.5,153V234M753.5,153V181" fill="none" stroke="#a01c1c" stroke-width="1" shape-rendering="crispEdges"/><path d="M502.5,146V178M508.5,146V197M510.5,197V201M511.5,201V265M513.5,169V265M516.5,160V169M520.5,160V164M521.5,164V232M524.5,188V232M525.5,188V237M532.5,201V237M535.5,201V268M539.5,154V268M543.5,154V155M545.5,155V250M549.5,222V250M551.5,154V222M552.5,154V183M557.5,183V241M560.5,231V241M563.5,210V231M565.5,149V210M568.5,149V201M572.5,185V201M574.5,185V236M576.5,223V236M577.5,187V223M578.5,187V203M579.5,165V203M581.5,165V263M588.5,200V263M592.5,199V200M601.5,199V234M603.5,215V234M605.5,157V215M606.5,157V172M607.5,169V172M613.5,169V238M614.5,224V238M619.5,224V224M621.5,224V277M625.5,186V277M636.5,186V240M640.5,194V240M641.5,170V194M643.5,170V279M644.5,147V279M650.5,147V233M651.5,209V233M655.5,209V226M656.5,226V261M657.5,211V261M658.5,191V211M661.5,191V209M664.5,209V219M665.5,219V222M667.5,181V222M677.5,148V181M678.5,148V183M679.5,183V235M680.5,150V235M681.5,150V275M687.5,185V275M690.5,185V253M691.5,158V253M692.5,158V225M693.5,224V225M696.5,207V224M698.5,196V207M699.5,195V196M700.5,195V205M701.5,205V278M708.5,160V278M709.5,160V171M711.5,171V204M717.5,204V251M719.5,193V251M720.5,147V193M723.5,147V180M725.5,180V203M730.5,180V203M731.5,180V210M733.5,162V210M734.5,162V208M736.5,208V239M737.5,155V239M738.5,155V248M739.5,248V252M742.5,193V252" fill="none" stroke="#f00000" stroke-width="1" shape-rendering="crispEdges"/><line x1="523.9" y1="146" x2="523.9" y2="280" stroke="#909090" stroke-width="0.8" opacity="0.6"/><line x1="549.2" y1="146" x2="549.2" y2="280" stroke="#909090" stroke-width="0.8" opacity="0.6"/><line x1="574.5" y1="146" x2="574.5" y2="280" stroke="#909090" stroke-width="0.8" opacity="0.6"/><line x1="599.7" y1="146" x2="599.7" y2="280" stroke="#909090" stroke-width="0.8" opacity="0.6"/><line x1="625.0" y1="146" x2="625.0" y2="280" stroke="#909090" stroke-width="0.8" opacity="0.6"/><line x1="650.3" y1="146" x2="650.3" y2="280" stroke="#909090" stroke-width="0.8" opacity="0.6"/><line x1="675.6" y1="146" x2="675.6" y2="280" stroke="#909090" stroke-width="0.8" opacity="0.6"/><line x1="700.9" y1="146" x2="700.9" y2="280" stroke="#909090" stroke-width="0.8" opacity="0.6"/><line x1="726.1" y1="146" x2="726.1" y2="280" stroke="#909090" stroke-width="0.8" opacity="0.6"/><line x1="751.4" y1="146" x2="751.4" y2="280" stroke="#909090" stroke-width="0.8" opacity="0.6"/><line x1="502" y1="172.9" x2="754" y2="172.9" stroke="#909090" stroke-width="0.8" opacity="0.6"/><line x1="502" y1="200" x2="754" y2="200" stroke="#909090" stroke-width="0.8" opacity="0.6"/><line x1="502" y1="252.6" x2="754" y2="252.6" stroke="#909090" stroke-width="0.8" opacity="0.6"/><line x1="502" y1="228.8" x2="754" y2="228.8" stroke="#9a9a9a" stroke-width="2"/><line x1="686" y1="146" x2="686" y2="280" stroke="#9a9a9a" stroke-width="1.2"/><line x1="754" y1="146" x2="754" y2="281" stroke="#777" stroke-width="1"/><line x1="302" y1="280.5" x2="754" y2="280.5" stroke="#777" stroke-width="1"/><rect x="302.5" y="216.5" width="22.5" height="8.5" fill="#d2d2d2" stroke="#ececec" stroke-width="0.8"/><line x1="302.5" y1="225" x2="325" y2="225" stroke="#cc1a1a" stroke-width="0.7" opacity="0.7"/><text x="304.5" y="223.2" fill="#333" font-size="6.6" font-family="Liberation Sans">11.287</text><rect x="327.5" y="231.5" width="23.0" height="8.0" fill="#d2d2d2" stroke="#ececec" stroke-width="0.8"/><line x1="327.5" y1="239.5" x2="350.5" y2="239.5" stroke="#1a1ad4" stroke-width="0.7" opacity="0.7"/><text x="329.5" y="237.7" fill="#333" font-size="6.6" font-family="Liberation Sans">11.606</text><rect x="352.5" y="231.5" width="27.5" height="8.0" fill="#d2d2d2" stroke="#ececec" stroke-width="0.8"/><line x1="352.5" y1="239.5" x2="380" y2="239.5" stroke="#d2c81a" stroke-width="0.7" opacity="0.7"/><text x="354.5" y="237.7" fill="#333" font-size="6.6" font-family="Liberation Sans">6.612</text><rect x="382.5" y="185" width="27.5" height="8" fill="#d2d2d2" stroke="#ececec" stroke-width="0.8"/><line x1="382.5" y1="193" x2="410" y2="193" stroke="#bbb" stroke-width="0.7" opacity="0.7"/><text x="384.5" y="191.2" fill="#333" font-size="6.6" font-family="Liberation Sans">17.052</text><rect x="412" y="209.5" width="28.5" height="8.0" fill="#d2d2d2" stroke="#ececec" stroke-width="0.8"/><line x1="412" y1="217.5" x2="440.5" y2="217.5" stroke="#cc1a1a" stroke-width="0.7" opacity="0.7"/><text x="414" y="215.7" fill="#333" font-size="6.6" font-family="Liberation Sans">12.405</text><rect x="442" y="227" width="28" height="8" fill="#d2d2d2" stroke="#ececec" stroke-width="0.8"/><line x1="442" y1="235" x2="470" y2="235" stroke="#cc1a1a" stroke-width="0.7" opacity="0.7"/><text x="444" y="233.2" fill="#333" font-size="6.6" font-family="Liberation Sans">9.083</text><rect x="472" y="230" width="28" height="8" fill="#d2d2d2" stroke="#ececec" stroke-width="0.8"/><line x1="472" y1="238" x2="500" y2="238" stroke="#bbb" stroke-width="0.7" opacity="0.7"/><text x="474" y="236.2" fill="#333" font-size="6.6" font-family="Liberation Sans">8.425</text><line x1="503.0" y1="281.5" x2="503.0" y2="289" stroke="#7a7a7a" stroke-width="1.1"/><line x1="507.2" y1="281.5" x2="507.2" y2="289" stroke="#7a7a7a" stroke-width="1.1"/><line x1="511.4" y1="281.5" x2="511.4" y2="289" stroke="#7a7a7a" stroke-width="1.1"/><line x1="515.6" y1="281.5" x2="515.6" y2="289" stroke="#7a7a7a" stroke-width="1.1"/><line x1="519.9" y1="281.5" x2="519.9" y2="289" stroke="#7a7a7a" stroke-width="1.1"/><line x1="524.1" y1="281.5" x2="524.1" y2="289" stroke="#7a7a7a" stroke-width="1.1"/><line x1="528.3" y1="281.5" x2="528.3" y2="289" stroke="#7a7a7a" stroke-width="1.1"/><line x1="532.5" y1="281.5" x2="532.5" y2="289" stroke="#7a7a7a" stroke-width="1.1"/><line x1="536.7" y1="281.5" x2="536.7" y2="289" stroke="#7a7a7a" stroke-width="1.1"/><line x1="540.9" y1="281.5" x2="540.9" y2="289" stroke="#7a7a7a" stroke-width="1.1"/><line x1="545.2" y1="281.5" x2="545.2" y2="289" stroke="#7a7a7a" stroke-width="1.1"/><line x1="549.4" y1="281.5" x2="549.4" y2="289" stroke="#7a7a7a" stroke-width="1.1"/><line x1="553.6" y1="281.5" x2="553.6" y2="289" stroke="#7a7a7a" stroke-width="1.1"/><line x1="557.8" y1="281.5" x2="557.8" y2="289" stroke="#7a7a7a" stroke-width="1.1"/><line x1="562.0" y1="281.5" x2="562.0" y2="289" stroke="#7a7a7a" stroke-width="1.1"/><line x1="566.2" y1="281.5" x2="566.2" y2="289" stroke="#7a7a7a" stroke-width="1.1"/><line x1="570.4" y1="281.5" x2="570.4" y2="289" stroke="#7a7a7a" stroke-width="1.1"/><line x1="574.7" y1="281.5" x2="574.7" y2="289" stroke="#7a7a7a" stroke-width="1.1"/><line x1="578.9" y1="281.5" x2="578.9" y2="289" stroke="#7a7a7a" stroke-width="1.1"/><line x1="583.1" y1="281.5" x2="583.1" y2="289" stroke="#7a7a7a" stroke-width="1.1"/><line x1="587.3" y1="281.5" x2="587.3" y2="289" stroke="#7a7a7a" stroke-width="1.1"/><line x1="591.5" y1="281.5" x2="591.5" y2="289" stroke="#7a7a7a" stroke-width="1.1"/><line x1="595.7" y1="281.5" x2="595.7" y2="289" stroke="#7a7a7a" stroke-width="1.1"/><line x1="599.9" y1="281.5" x2="599.9" y2="289" stroke="#7a7a7a" stroke-width="1.1"/><line x1="604.2" y1="281.5" x2="604.2" y2="289" stroke="#7a7a7a" stroke-width="1.1"/><line x1="608.4" y1="281.5" x2="608.4" y2="289" stroke="#7a7a7a" stroke-width="1.1"/><line x1="612.6" y1="281.5" x2="612.6" y2="289" stroke="#7a7a7a" stroke-width="1.1"/><line x1="616.8" y1="281.5" x2="616.8" y2="289" stroke="#7a7a7a" stroke-width="1.1"/><line x1="621.0" y1="281.5" x2="621.0" y2="289" stroke="#7a7a7a" stroke-width="1.1"/><line x1="625.2" y1="281.5" x2="625.2" y2="289" stroke="#7a7a7a" stroke-width="1.1"/><line x1="629.5" y1="281.5" x2="629.5" y2="289" stroke="#7a7a7a" stroke-width="1.1"/><line x1="633.7" y1="281.5" x2="633.7" y2="289" stroke="#7a7a7a" stroke-width="1.1"/><line x1="637.9" y1="281.5" x2="637.9" y2="289" stroke="#7a7a7a" stroke-width="1.1"/><line x1="642.1" y1="281.5" x2="642.1" y2="289" stroke="#7a7a7a" stroke-width="1.1"/><line x1="646.3" y1="281.5" x2="646.3" y2="289" stroke="#7a7a7a" stroke-width="1.1"/><line x1="650.5" y1="281.5" x2="650.5" y2="289" stroke="#7a7a7a" stroke-width="1.1"/><line x1="654.7" y1="281.5" x2="654.7" y2="289" stroke="#7a7a7a" stroke-width="1.1"/><line x1="659.0" y1="281.5" x2="659.0" y2="289" stroke="#7a7a7a" stroke-width="1.1"/><line x1="663.2" y1="281.5" x2="663.2" y2="289" stroke="#7a7a7a" stroke-width="1.1"/><line x1="667.4" y1="281.5" x2="667.4" y2="289" stroke="#7a7a7a" stroke-width="1.1"/><line x1="671.6" y1="281.5" x2="671.6" y2="289" stroke="#7a7a7a" stroke-width="1.1"/><line x1="675.8" y1="281.5" x2="675.8" y2="289" stroke="#7a7a7a" stroke-width="1.1"/><line x1="680.0" y1="281.5" x2="680.0" y2="289" stroke="#7a7a7a" stroke-width="1.1"/><line x1="684.2" y1="281.5" x2="684.2" y2="289" stroke="#7a7a7a" stroke-width="1.1"/><line x1="688.5" y1="281.5" x2="688.5" y2="289" stroke="#7a7a7a" stroke-width="1.1"/><line x1="692.7" y1="281.5" x2="692.7" y2="289" stroke="#7a7a7a" stroke-width="1.1"/><line x1="696.9" y1="281.5" x2="696.9" y2="289" stroke="#7a7a7a" stroke-width="1.1"/><line x1="701.1" y1="281.5" x2="701.1" y2="289" stroke="#7a7a7a" stroke-width="1.1"/><line x1="705.3" y1="281.5" x2="705.3" y2="289" stroke="#7a7a7a" stroke-width="1.1"/><line x1="709.5" y1="281.5" x2="709.5" y2="289" stroke="#7a7a7a" stroke-width="1.1"/><line x1="713.8" y1="281.5" x2="713.8" y2="289" stroke="#7a7a7a" stroke-width="1.1"/><line x1="718.0" y1="281.5" x2="718.0" y2="289" stroke="#7a7a7a" stroke-width="1.1"/><line x1="722.2" y1="281.5" x2="722.2" y2="289" stroke="#7a7a7a" stroke-width="1.1"/><line x1="726.4" y1="281.5" x2="726.4" y2="289" stroke="#7a7a7a" stroke-width="1.1"/><line x1="730.6" y1="281.5" x2="730.6" y2="289" stroke="#7a7a7a" stroke-width="1.1"/><line x1="734.8" y1="281.5" x2="734.8" y2="289" stroke="#7a7a7a" stroke-width="1.1"/><line x1="739.0" y1="281.5" x2="739.0" y2="289" stroke="#7a7a7a" stroke-width="1.1"/><line x1="743.3" y1="281.5" x2="743.3" y2="289" stroke="#7a7a7a" stroke-width="1.1"/><line x1="747.5" y1="281.5" x2="747.5" y2="289" stroke="#7a7a7a" stroke-width="1.1"/><line x1="751.7" y1="281.5" x2="751.7" y2="289" stroke="#7a7a7a" stroke-width="1.1"/><text x="526.0" y="294.6" fill="#222" font-size="6.4" font-weight="700" font-family="Liberation Sans" textLength="22.6" lengthAdjust="spacingAndGlyphs">16:21:00</text><text x="551.3" y="294.6" fill="#222" font-size="6.4" font-weight="700" font-family="Liberation Sans" textLength="22.6" lengthAdjust="spacingAndGlyphs">16:22:00</text><text x="576.6" y="294.6" fill="#222" font-size="6.4" font-weight="700" font-family="Liberation Sans" textLength="22.6" lengthAdjust="spacingAndGlyphs">16:23:00</text><text x="601.8" y="294.6" fill="#222" font-size="6.4" font-weight="700" font-family="Liberation Sans" textLength="22.6" lengthAdjust="spacingAndGlyphs">16:24:00</text><text x="627.1" y="294.6" fill="#222" font-size="6.4" font-weight="700" font-family="Liberation Sans" textLength="22.6" lengthAdjust="spacingAndGlyphs">16:25:00</text><text x="652.4" y="294.6" fill="#222" font-size="6.4" font-weight="700" font-family="Liberation Sans" textLength="22.6" lengthAdjust="spacingAndGlyphs">16:26:00</text><text x="677.7" y="294.6" fill="#222" font-size="6.4" font-weight="700" font-family="Liberation Sans" textLength="22.6" lengthAdjust="spacingAndGlyphs">16:27:00</text><text x="703.0" y="294.6" fill="#222" font-size="6.4" font-weight="700" font-family="Liberation Sans" textLength="22.6" lengthAdjust="spacingAndGlyphs">16:28:00</text><text x="728.2" y="294.6" fill="#222" font-size="6.4" font-weight="700" font-family="Liberation Sans" textLength="22.6" lengthAdjust="spacingAndGlyphs">16:29:00</text><rect x="661" y="282" width="49" height="7.5" fill="#e6e6e6" stroke="#999" stroke-width="0.8"/><text x="662" y="288.3" fill="#222" font-size="6.4" font-weight="700" font-family="Liberation Sans" textLength="47.3" lengthAdjust="spacingAndGlyphs">20/01/21 16:27:24</text><rect x="502.5" y="297.5" width="59.5" height="9.0" fill="#ececec"/><path d="M502.5,306.5 V297.5 H562" fill="none" stroke="#8a8a8a" stroke-width="1"/><text x="508" y="304.3" fill="#222" font-size="6.6" font-weight="700" font-family="Liberation Sans" textLength="48" lengthAdjust="spacingAndGlyphs">20/01/21 16:20:06</text><rect x="568" y="297.5" width="59" height="9.0" fill="#ececec"/><path d="M568,306.5 V297.5 H627" fill="none" stroke="#8a8a8a" stroke-width="1"/><text x="580.4" y="304.3" fill="#222" font-size="6.6" font-weight="700" font-family="Liberation Sans" textLength="32.5" lengthAdjust="spacingAndGlyphs">10 Minutes</text><rect x="633.5" y="297.5" width="59.0" height="9.0" fill="#ececec"/><path d="M633.5,306.5 V297.5 H692.5" fill="none" stroke="#8a8a8a" stroke-width="1"/><text x="645.9" y="304.3" fill="#222" font-size="6.6" font-weight="700" font-family="Liberation Sans" textLength="34" lengthAdjust="spacingAndGlyphs">10 Seconds</text><rect x="694.5" y="297.5" width="58.5" height="9.0" fill="#ececec"/><path d="M694.5,306.5 V297.5 H753" fill="none" stroke="#8a8a8a" stroke-width="1"/><text x="699.2" y="304.3" fill="#222" font-size="6.6" font-weight="700" font-family="Liberation Sans" textLength="48.3" lengthAdjust="spacingAndGlyphs">20/01/21 16:30:06</text><rect x="302" y="309" width="452" height="9" fill="#c8c8c8"/><rect x="302" y="309" width="8" height="9" fill="#e8e8e8"/><path d="M303.8,311 v4 M307.5,311 v4 l-3,-2 z" fill="#222" stroke="#222" stroke-width="0.8"/><rect x="310" y="309" width="26" height="9" fill="#efefef"/><text x="313.5" y="316" fill="#222" font-size="7" font-weight="700" font-family="Liberation Sans">&lt;</text><rect x="728" y="309" width="8" height="9" fill="#efefef"/><text x="730" y="316" fill="#333" font-size="7" font-family="Liberation Sans">&gt;</text><rect x="737.8" y="309.8" width="7" height="7.5" fill="#eaeaea" stroke="#c8c8c8" stroke-width="0.6"/><ellipse cx="739.9" cy="313.3" rx="0.8" ry="1.2" fill="#111"/><ellipse cx="742.3" cy="313.3" rx="0.6" ry="1.1" fill="#333"/><rect x="746.5" y="310" width="7.5" height="7" fill="#5a5a5a" rx="0.8"/><circle cx="747.9" cy="311.6" r="0.7" fill="#d03030"/><circle cx="747.9" cy="313.4" r="0.7" fill="#c8b020"/><circle cx="747.9" cy="315.2" r="0.7" fill="#20a0a0"/><rect x="749.3" y="310.8" width="1.3" height="5.6" fill="#e8e8e8"/><rect x="751.5" y="310.8" width="1.3" height="5.6" fill="#e8e8e8"/><rect x="302" y="318.8" width="452" height="1.7" fill="#a0a0a0"/><rect x="302" y="320" width="452" height="14" fill="#fff"/><text x="321.5" y="329.8" text-anchor="middle" fill="#222" font-size="7.5" font-family="Liberation Sans">P</text><text x="333.0" y="329.8" text-anchor="middle" fill="#222" font-size="7.5" font-family="Liberation Sans">C</text><text x="344.5" y="329.8" text-anchor="middle" fill="#222" font-size="7.5" font-family="Liberation Sans">V</text><text x="355.5" y="329.8" text-anchor="middle" fill="#222" font-size="7.5" font-family="Liberation Sans">S.</text><text x="366.5" y="329.8" text-anchor="middle" fill="#222" font-size="7.5" font-family="Liberation Sans">C</text><text x="374.5" y="329.8" fill="#222" font-size="7" font-family="Liberation Sans" textLength="56.69" lengthAdjust="spacingAndGlyphs">Variable description</text><text x="624.5" y="329.8" fill="#222" font-size="7" font-family="Liberation Sans" textLength="27.49" lengthAdjust="spacingAndGlyphs">Real time</text><text x="660.5" y="329.8" fill="#222" font-size="7" font-family="Liberation Sans" textLength="11.58" lengthAdjust="spacingAndGlyphs">Unit</text><text x="681.5" y="329.8" fill="#222" font-size="7" font-family="Liberation Sans" textLength="24.13" lengthAdjust="spacingAndGlyphs">Average</text><rect x="302" y="333.6" width="452" height="11.2" fill="#d6d2ca"/><line x1="302" y1="344.3" x2="754" y2="344.3" stroke="#a8a49c" stroke-width="1"/><text x="309" y="341.40000000000003" text-anchor="middle" fill="#333" font-size="7.5" font-family="Liberation Sans">1</text><rect x="316.5" y="334.1" width="10" height="10" rx="1" fill="#000"/><path d="M320.6,335.8 h3.6 l2,2 v5.3 h-5.6 z" fill="#dcdcdc" stroke="#888" stroke-width="0.4"/><path d="M321.6,338.6 h3 M321.6,340.1 h3 M321.6,341.6 h3" stroke="#999" stroke-width="0.5"/><ellipse cx="321.3" cy="334.90000000000003" rx="1.4" ry="1" fill="#ffd400"/><rect x="327.5" y="334.1" width="11" height="10" fill="#dfe4ec"/><path d="M328,335.20000000000005 h10" stroke="#e04040" stroke-width="0.8" stroke-dasharray="1.2,0.6"/><path d="M327.8,340.6 l2.6,-2.4 l3.2,4 l4.6,-4.2" fill="none" stroke="#30b030" stroke-width="1.2"/><path d="M328,343.40000000000003 h10" stroke="#4060d0" stroke-width="0.8" stroke-dasharray="1.2,0.6"/><rect x="339.5" y="334.1" width="10.5" height="10" fill="#a8c8e8" stroke="#7a9cc0" stroke-width="0.6"/><path d="M340.2,339.6 Q344.8,334.20000000000005 349.4,339.6 Q344.8,343.40000000000003 340.2,339.6 Z" fill="#e8eef4" stroke="#222" stroke-width="0.7"/><path d="M340,339.20000000000005 Q344.8,333.8 349.6,339.20000000000005" fill="none" stroke="#111" stroke-width="1.5"/><circle cx="345.2" cy="339.40000000000003" r="2" fill="#2a8a3a"/><circle cx="345.2" cy="339.40000000000003" r="1" fill="#000"/><rect x="350.5" y="334.1" width="10" height="10" fill="#a8c8e8" stroke="#7a9cc0" stroke-width="0.6"/><rect x="353.8" y="335.1" width="3.6" height="8" fill="#f4f4f4" stroke="#222" stroke-width="0.8"/><path d="M355,336.6 h1.6 M355,338.6 h1.6 M355,340.6 h1.6" stroke="#222" stroke-width="0.6"/><rect x="361.5" y="334.1" width="10.5" height="10" fill="#ff0000"/><text x="373.5" y="341.40000000000003" fill="#222" font-size="7" font-family="Liberation Sans" textLength="44.85" lengthAdjust="spacingAndGlyphs">Average speed</text><text x="625" y="341.40000000000003" fill="#222" font-size="7" font-family="Liberation Sans">4.5</text><text x="660.5" y="341.40000000000003" fill="#222" font-size="7" font-family="Liberation Sans">rpm</text><text x="682" y="341.40000000000003" fill="#222" font-size="7" font-family="Liberation Sans">NA</text><rect x="302" y="344.78" width="452" height="11.2" fill="#d6d2ca"/><line x1="302" y1="355.47999999999996" x2="754" y2="355.47999999999996" stroke="#a8a49c" stroke-width="1"/><text x="309" y="352.58" text-anchor="middle" fill="#333" font-size="7.5" font-family="Liberation Sans">2</text><rect x="316.5" y="345.28" width="10" height="10" rx="1" fill="#000"/><path d="M320.6,346.97999999999996 h3.6 l2,2 v5.3 h-5.6 z" fill="#dcdcdc" stroke="#888" stroke-width="0.4"/><path d="M321.6,349.78 h3 M321.6,351.28 h3 M321.6,352.78 h3" stroke="#999" stroke-width="0.5"/><ellipse cx="321.3" cy="346.08" rx="1.4" ry="1" fill="#ffd400"/><rect x="327.5" y="345.28" width="11" height="10" fill="#dfe4ec"/><path d="M328,346.38 h10" stroke="#e04040" stroke-width="0.8" stroke-dasharray="1.2,0.6"/><path d="M327.8,351.78 l2.6,-2.4 l3.2,4 l4.6,-4.2" fill="none" stroke="#30b030" stroke-width="1.2"/><path d="M328,354.58 h10" stroke="#4060d0" stroke-width="0.8" stroke-dasharray="1.2,0.6"/><rect x="339.5" y="345.28" width="10.5" height="10" fill="#a8c8e8" stroke="#7a9cc0" stroke-width="0.6"/><path d="M340.2,350.78 Q344.8,345.38 349.4,350.78 Q344.8,354.58 340.2,350.78 Z" fill="#e8eef4" stroke="#222" stroke-width="0.7"/><path d="M340,350.38 Q344.8,344.97999999999996 349.6,350.38" fill="none" stroke="#111" stroke-width="1.5"/><circle cx="345.2" cy="350.58" r="2" fill="#2a8a3a"/><circle cx="345.2" cy="350.58" r="1" fill="#000"/><rect x="350.5" y="345.28" width="10" height="10" fill="#a8c8e8" stroke="#7a9cc0" stroke-width="0.6"/><rect x="353.8" y="346.28" width="3.6" height="8" fill="#f4f4f4" stroke="#222" stroke-width="0.8"/><path d="M355,347.78 h1.6 M355,349.78 h1.6 M355,351.78 h1.6" stroke="#222" stroke-width="0.6"/><rect x="361.5" y="345.28" width="10.5" height="10" fill="#0000ff"/><text x="373.5" y="352.58" fill="#222" font-size="7" font-family="Liberation Sans" textLength="32.70" lengthAdjust="spacingAndGlyphs">Max speed</text><text x="625" y="352.58" fill="#222" font-size="7" font-family="Liberation Sans">7</text><text x="660.5" y="352.58" fill="#222" font-size="7" font-family="Liberation Sans">rpm</text><text x="682" y="352.58" fill="#222" font-size="7" font-family="Liberation Sans">NA</text><rect x="302" y="355.96" width="452" height="11.2" fill="#d6d2ca"/><line x1="302" y1="366.65999999999997" x2="754" y2="366.65999999999997" stroke="#a8a49c" stroke-width="1"/><text x="309" y="363.76" text-anchor="middle" fill="#333" font-size="7.5" font-family="Liberation Sans">3</text><rect x="316.5" y="356.46" width="10" height="10" rx="1" fill="#000"/><path d="M320.6,358.15999999999997 h3.6 l2,2 v5.3 h-5.6 z" fill="#dcdcdc" stroke="#888" stroke-width="0.4"/><path d="M321.6,360.96 h3 M321.6,362.46 h3 M321.6,363.96 h3" stroke="#999" stroke-width="0.5"/><ellipse cx="321.3" cy="357.26" rx="1.4" ry="1" fill="#ffd400"/><rect x="327.5" y="356.46" width="11" height="10" fill="#dfe4ec"/><path d="M328,357.56 h10" stroke="#e04040" stroke-width="0.8" stroke-dasharray="1.2,0.6"/><path d="M327.8,362.96 l2.6,-2.4 l3.2,4 l4.6,-4.2" fill="none" stroke="#30b030" stroke-width="1.2"/><path d="M328,365.76 h10" stroke="#4060d0" stroke-width="0.8" stroke-dasharray="1.2,0.6"/><rect x="339.5" y="356.46" width="10.5" height="10" fill="#a8c8e8" stroke="#7a9cc0" stroke-width="0.6"/><path d="M340.2,361.96 Q344.8,356.56 349.4,361.96 Q344.8,365.76 340.2,361.96 Z" fill="#e8eef4" stroke="#222" stroke-width="0.7"/><path d="M340,361.56 Q344.8,356.15999999999997 349.6,361.56" fill="none" stroke="#111" stroke-width="1.5"/><circle cx="345.2" cy="361.76" r="2" fill="#2a8a3a"/><circle cx="345.2" cy="361.76" r="1" fill="#000"/><rect x="350.5" y="356.46" width="10" height="10" fill="#a8c8e8" stroke="#7a9cc0" stroke-width="0.6"/><rect x="353.8" y="357.46" width="3.6" height="8" fill="#f4f4f4" stroke="#222" stroke-width="0.8"/><path d="M355,358.96 h1.6 M355,360.96 h1.6 M355,362.96 h1.6" stroke="#222" stroke-width="0.6"/><rect x="361.5" y="356.46" width="10.5" height="10" fill="#ffff00"/><text x="373.5" y="363.76" fill="#222" font-size="7" font-family="Liberation Sans" textLength="30.84" lengthAdjust="spacingAndGlyphs">Min speed</text><text x="625" y="363.76" fill="#222" font-size="7" font-family="Liberation Sans">2</text><text x="660.5" y="363.76" fill="#222" font-size="7" font-family="Liberation Sans">rpm</text><text x="682" y="363.76" fill="#222" font-size="7" font-family="Liberation Sans">NA</text><rect x="302" y="367.14" width="452" height="11.2" fill="#d6d2ca"/><line x1="302" y1="377.84" x2="754" y2="377.84" stroke="#a8a49c" stroke-width="1"/><text x="309" y="374.94" text-anchor="middle" fill="#333" font-size="7.5" font-family="Liberation Sans">4</text><rect x="316.5" y="367.64" width="10" height="10" rx="1" fill="#000"/><path d="M320.6,369.34 h3.6 l2,2 v5.3 h-5.6 z" fill="#dcdcdc" stroke="#888" stroke-width="0.4"/><path d="M321.6,372.14 h3 M321.6,373.64 h3 M321.6,375.14 h3" stroke="#999" stroke-width="0.5"/><ellipse cx="321.3" cy="368.44" rx="1.4" ry="1" fill="#ffd400"/><rect x="327.5" y="367.64" width="11" height="10" fill="#dfe4ec"/><path d="M328,368.74 h10" stroke="#e04040" stroke-width="0.8" stroke-dasharray="1.2,0.6"/><path d="M327.8,374.14 l2.6,-2.4 l3.2,4 l4.6,-4.2" fill="none" stroke="#30b030" stroke-width="1.2"/><path d="M328,376.94 h10" stroke="#4060d0" stroke-width="0.8" stroke-dasharray="1.2,0.6"/><rect x="339.5" y="367.64" width="10.5" height="10" fill="#a8c8e8" stroke="#7a9cc0" stroke-width="0.6"/><path d="M340.2,373.14 Q344.8,367.74 349.4,373.14 Q344.8,376.94 340.2,373.14 Z" fill="#e8eef4" stroke="#222" stroke-width="0.7"/><path d="M340,372.74 Q344.8,367.34 349.6,372.74" fill="none" stroke="#111" stroke-width="1.5"/><circle cx="345.2" cy="372.94" r="2" fill="#2a8a3a"/><circle cx="345.2" cy="372.94" r="1" fill="#000"/><rect x="350.5" y="367.64" width="10" height="10" fill="#a8c8e8" stroke="#7a9cc0" stroke-width="0.6"/><rect x="353.8" y="368.64" width="3.6" height="8" fill="#f4f4f4" stroke="#222" stroke-width="0.8"/><path d="M355,370.14 h1.6 M355,372.14 h1.6 M355,374.14 h1.6" stroke="#222" stroke-width="0.6"/><rect x="361.5" y="367.64" width="10.5" height="10" fill="#00ffff"/><text x="373.5" y="374.94" fill="#222" font-size="7" font-family="Liberation Sans" textLength="56.86" lengthAdjust="spacingAndGlyphs">Pitch angle blade 1</text><text x="625" y="374.94" fill="#222" font-size="7" font-family="Liberation Sans">18</text><text x="660.5" y="374.94" fill="#222" font-size="7" font-family="Liberation Sans">&#176;</text><text x="682" y="374.94" fill="#222" font-size="7" font-family="Liberation Sans">NA</text><rect x="302" y="378.32" width="452" height="11.2" fill="#d6d2ca"/><line x1="302" y1="389.02" x2="754" y2="389.02" stroke="#a8a49c" stroke-width="1"/><text x="309" y="386.12" text-anchor="middle" fill="#333" font-size="7.5" font-family="Liberation Sans">5</text><rect x="316.5" y="378.82" width="10" height="10" rx="1" fill="#000"/><path d="M320.6,380.52 h3.6 l2,2 v5.3 h-5.6 z" fill="#dcdcdc" stroke="#888" stroke-width="0.4"/><path d="M321.6,383.32 h3 M321.6,384.82 h3 M321.6,386.32 h3" stroke="#999" stroke-width="0.5"/><ellipse cx="321.3" cy="379.62" rx="1.4" ry="1" fill="#ffd400"/><rect x="327.5" y="378.82" width="11" height="10" fill="#dfe4ec"/><path d="M328,379.92 h10" stroke="#e04040" stroke-width="0.8" stroke-dasharray="1.2,0.6"/><path d="M327.8,385.32 l2.6,-2.4 l3.2,4 l4.6,-4.2" fill="none" stroke="#30b030" stroke-width="1.2"/><path d="M328,388.12 h10" stroke="#4060d0" stroke-width="0.8" stroke-dasharray="1.2,0.6"/><rect x="339.5" y="378.82" width="10.5" height="10" fill="#a8c8e8" stroke="#7a9cc0" stroke-width="0.6"/><path d="M340.2,384.32 Q344.8,378.92 349.4,384.32 Q344.8,388.12 340.2,384.32 Z" fill="#e8eef4" stroke="#222" stroke-width="0.7"/><path d="M340,383.92 Q344.8,378.52 349.6,383.92" fill="none" stroke="#111" stroke-width="1.5"/><circle cx="345.2" cy="384.12" r="2" fill="#2a8a3a"/><circle cx="345.2" cy="384.12" r="1" fill="#000"/><rect x="350.5" y="378.82" width="10" height="10" fill="#a8c8e8" stroke="#7a9cc0" stroke-width="0.6"/><rect x="353.8" y="379.82" width="3.6" height="8" fill="#f4f4f4" stroke="#222" stroke-width="0.8"/><path d="M355,381.32 h1.6 M355,383.32 h1.6 M355,385.32 h1.6" stroke="#222" stroke-width="0.6"/><rect x="361.5" y="378.82" width="10.5" height="10" fill="#ff0000"/><text x="373.5" y="386.12" fill="#222" font-size="7" font-family="Liberation Sans" textLength="56.86" lengthAdjust="spacingAndGlyphs">Pitch angle blade 2</text><text x="625" y="386.12" fill="#222" font-size="7" font-family="Liberation Sans">7</text><text x="660.5" y="386.12" fill="#222" font-size="7" font-family="Liberation Sans">&#176;</text><text x="682" y="386.12" fill="#222" font-size="7" font-family="Liberation Sans">NA</text><rect x="302" y="389.5" width="452" height="11.2" fill="#d6d2ca"/><line x1="302" y1="400.2" x2="754" y2="400.2" stroke="#a8a49c" stroke-width="1"/><text x="309" y="397.3" text-anchor="middle" fill="#333" font-size="7.5" font-family="Liberation Sans">6</text><rect x="316.5" y="390.0" width="10" height="10" rx="1" fill="#000"/><path d="M320.6,391.7 h3.6 l2,2 v5.3 h-5.6 z" fill="#dcdcdc" stroke="#888" stroke-width="0.4"/><path d="M321.6,394.5 h3 M321.6,396.0 h3 M321.6,397.5 h3" stroke="#999" stroke-width="0.5"/><ellipse cx="321.3" cy="390.8" rx="1.4" ry="1" fill="#ffd400"/><rect x="327.5" y="390.0" width="11" height="10" fill="#dfe4ec"/><path d="M328,391.1 h10" stroke="#e04040" stroke-width="0.8" stroke-dasharray="1.2,0.6"/><path d="M327.8,396.5 l2.6,-2.4 l3.2,4 l4.6,-4.2" fill="none" stroke="#30b030" stroke-width="1.2"/><path d="M328,399.3 h10" stroke="#4060d0" stroke-width="0.8" stroke-dasharray="1.2,0.6"/><rect x="339.5" y="390.0" width="10.5" height="10" fill="#a8c8e8" stroke="#7a9cc0" stroke-width="0.6"/><path d="M340.2,395.5 Q344.8,390.1 349.4,395.5 Q344.8,399.3 340.2,395.5 Z" fill="#e8eef4" stroke="#222" stroke-width="0.7"/><path d="M340,395.1 Q344.8,389.7 349.6,395.1" fill="none" stroke="#111" stroke-width="1.5"/><circle cx="345.2" cy="395.3" r="2" fill="#2a8a3a"/><circle cx="345.2" cy="395.3" r="1" fill="#000"/><rect x="350.5" y="390.0" width="10" height="10" fill="#a8c8e8" stroke="#7a9cc0" stroke-width="0.6"/><rect x="353.8" y="391.0" width="3.6" height="8" fill="#f4f4f4" stroke="#222" stroke-width="0.8"/><path d="M355,392.5 h1.6 M355,394.5 h1.6 M355,396.5 h1.6" stroke="#222" stroke-width="0.6"/><rect x="361.5" y="390.0" width="10.5" height="10" fill="#ff0000"/><text x="373.5" y="397.3" fill="#222" font-size="7" font-family="Liberation Sans" textLength="62.44" lengthAdjust="spacingAndGlyphs">Pitch anngle&#160; blade 3</text><text x="625" y="397.3" fill="#222" font-size="7" font-family="Liberation Sans">15</text><text x="660.5" y="397.3" fill="#222" font-size="7" font-family="Liberation Sans">&#176;</text><text x="682" y="397.3" fill="#222" font-size="7" font-family="Liberation Sans">NA</text><rect x="302" y="400.68" width="452" height="11.2" fill="#d6d2ca"/><line x1="302" y1="411.38" x2="754" y2="411.38" stroke="#a8a49c" stroke-width="1"/><text x="309" y="408.48" text-anchor="middle" fill="#333" font-size="7.5" font-family="Liberation Sans">7</text><rect x="316.5" y="401.18" width="10" height="10" rx="1" fill="#000"/><path d="M320.6,402.88 h3.6 l2,2 v5.3 h-5.6 z" fill="#dcdcdc" stroke="#888" stroke-width="0.4"/><path d="M321.6,405.68 h3 M321.6,407.18 h3 M321.6,408.68 h3" stroke="#999" stroke-width="0.5"/><ellipse cx="321.3" cy="401.98" rx="1.4" ry="1" fill="#ffd400"/><rect x="327.5" y="401.18" width="11" height="10" fill="#dfe4ec"/><path d="M328,402.28000000000003 h10" stroke="#e04040" stroke-width="0.8" stroke-dasharray="1.2,0.6"/><path d="M327.8,407.68 l2.6,-2.4 l3.2,4 l4.6,-4.2" fill="none" stroke="#30b030" stroke-width="1.2"/><path d="M328,410.48 h10" stroke="#4060d0" stroke-width="0.8" stroke-dasharray="1.2,0.6"/><rect x="339.5" y="401.18" width="10.5" height="10" fill="#a8c8e8" stroke="#7a9cc0" stroke-width="0.6"/><path d="M340.2,406.68 Q344.8,401.28000000000003 349.4,406.68 Q344.8,410.48 340.2,406.68 Z" fill="#e8eef4" stroke="#222" stroke-width="0.7"/><path d="M340,406.28000000000003 Q344.8,400.88 349.6,406.28000000000003" fill="none" stroke="#111" stroke-width="1.5"/><circle cx="345.2" cy="406.48" r="2" fill="#2a8a3a"/><circle cx="345.2" cy="406.48" r="1" fill="#000"/><rect x="350.5" y="401.18" width="10" height="10" fill="#a8c8e8" stroke="#7a9cc0" stroke-width="0.6"/><rect x="353.8" y="402.18" width="3.6" height="8" fill="#f4f4f4" stroke="#222" stroke-width="0.8"/><path d="M355,403.68 h1.6 M355,405.68 h1.6 M355,407.68 h1.6" stroke="#222" stroke-width="0.6"/><rect x="361.5" y="401.18" width="10.5" height="10" fill="#ff0000"/><text x="373.5" y="408.48" fill="#222" font-size="7" font-family="Liberation Sans" textLength="36.42" lengthAdjust="spacingAndGlyphs">Rotor speed</text><text x="625" y="408.48" fill="#222" font-size="7" font-family="Liberation Sans">25</text><text x="660.5" y="408.48" fill="#222" font-size="7" font-family="Liberation Sans">rpm</text><text x="682" y="408.48" fill="#222" font-size="7" font-family="Liberation Sans">NA</text><rect x="302" y="411.86" width="452" height="11.2" fill="#d6d2ca"/><line x1="302" y1="422.56" x2="754" y2="422.56" stroke="#a8a49c" stroke-width="1"/><text x="309" y="419.66" text-anchor="middle" fill="#333" font-size="7.5" font-family="Liberation Sans">8</text><rect x="316.5" y="412.36" width="10" height="10" rx="1" fill="#000"/><path d="M320.6,414.06 h3.6 l2,2 v5.3 h-5.6 z" fill="#dcdcdc" stroke="#888" stroke-width="0.4"/><path d="M321.6,416.86 h3 M321.6,418.36 h3 M321.6,419.86 h3" stroke="#999" stroke-width="0.5"/><ellipse cx="321.3" cy="413.16" rx="1.4" ry="1" fill="#ffd400"/><rect x="327.5" y="412.36" width="11" height="10" fill="#dfe4ec"/><path d="M328,413.46000000000004 h10" stroke="#e04040" stroke-width="0.8" stroke-dasharray="1.2,0.6"/><path d="M327.8,418.86 l2.6,-2.4 l3.2,4 l4.6,-4.2" fill="none" stroke="#30b030" stroke-width="1.2"/><path d="M328,421.66 h10" stroke="#4060d0" stroke-width="0.8" stroke-dasharray="1.2,0.6"/><rect x="339.5" y="412.36" width="32.5" height="10" fill="#fff"/><line x1="316" y1="320.5" x2="316" y2="333.5" stroke="#e4e4e4" stroke-width="1"/><line x1="316" y1="333.5" x2="316" y2="420" stroke="#a8a49c" stroke-width="1"/><line x1="327" y1="320.5" x2="327" y2="333.5" stroke="#e4e4e4" stroke-width="1"/><line x1="327" y1="333.5" x2="327" y2="420" stroke="#a8a49c" stroke-width="1"/><line x1="339" y1="320.5" x2="339" y2="333.5" stroke="#e4e4e4" stroke-width="1"/><line x1="339" y1="333.5" x2="339" y2="420" stroke="#a8a49c" stroke-width="1"/><line x1="350" y1="320.5" x2="350" y2="333.5" stroke="#e4e4e4" stroke-width="1"/><line x1="350" y1="333.5" x2="350" y2="420" stroke="#a8a49c" stroke-width="1"/><line x1="361" y1="320.5" x2="361" y2="333.5" stroke="#e4e4e4" stroke-width="1"/><line x1="361" y1="333.5" x2="361" y2="420" stroke="#a8a49c" stroke-width="1"/><line x1="372" y1="320.5" x2="372" y2="333.5" stroke="#e4e4e4" stroke-width="1"/><line x1="372" y1="333.5" x2="372" y2="420" stroke="#a8a49c" stroke-width="1"/><line x1="622" y1="320.5" x2="622" y2="333.5" stroke="#e4e4e4" stroke-width="1"/><line x1="622" y1="333.5" x2="622" y2="420" stroke="#a8a49c" stroke-width="1"/><line x1="658" y1="320.5" x2="658" y2="333.5" stroke="#e4e4e4" stroke-width="1"/><line x1="658" y1="333.5" x2="658" y2="420" stroke="#a8a49c" stroke-width="1"/><line x1="679" y1="320.5" x2="679" y2="333.5" stroke="#e4e4e4" stroke-width="1"/><line x1="679" y1="333.5" x2="679" y2="420" stroke="#a8a49c" stroke-width="1"/><rect x="300" y="421.5" width="460" height="5" fill="#2d2d2d"/><rect x="300" y="419.6" width="456" height="1" fill="#c8c8c8"/><rect x="300" y="420.6" width="456" height="1" fill="#8a8a8a"/><rect x="754.5" y="309" width="1.5" height="112" fill="#999"/><path d="M283,358.5 l3.3,-3 v1.6 h3.3 v2.8 h-3.3 v1.6 z" fill="#e42020"/><path d="M298,358.5 l-3.3,-3 v1.6 h-3.3 v2.8 h3.3 v1.6 z" fill="#2ea82e"/><path d="M283,366.8 l3.3,-3 v1.6 h3.3 v2.8 h-3.3 v1.6 z" fill="#e42020"/><path d="M298,366.8 l-3.3,-3 v1.6 h-3.3 v2.8 h3.3 v1.6 z" fill="#2ea82e"/><path d="M283,375.1 l3.3,-3 v1.6 h3.3 v2.8 h-3.3 v1.6 z" fill="#e42020"/><path d="M298,375.1 l-3.3,-3 v1.6 h-3.3 v2.8 h3.3 v1.6 z" fill="#2ea82e"/><path d="M283,383.4 l3.3,-3 v1.6 h3.3 v2.8 h-3.3 v1.6 z" fill="#e42020"/><path d="M298,383.4 l-3.3,-3 v1.6 h-3.3 v2.8 h3.3 v1.6 z" fill="#2ea82e"/><path d="M283,391.7 l3.3,-3 v1.6 h3.3 v2.8 h-3.3 v1.6 z" fill="#e42020"/><path d="M298,391.7 l-3.3,-3 v1.6 h-3.3 v2.8 h3.3 v1.6 z" fill="#2ea82e"/><path d="M283,400.0 l3.3,-3 v1.6 h3.3 v2.8 h-3.3 v1.6 z" fill="#e42020"/><path d="M298,400.0 l-3.3,-3 v1.6 h-3.3 v2.8 h3.3 v1.6 z" fill="#2ea82e"/><path d="M283,408.3 l3.3,-3 v1.6 h3.3 v2.8 h-3.3 v1.6 z" fill="#e42020"/><path d="M298,408.3 l-3.3,-3 v1.6 h-3.3 v2.8 h3.3 v1.6 z" fill="#2ea82e"/><path d="M283,416.6 l3.3,-3 v1.6 h3.3 v2.8 h-3.3 v1.6 z" fill="#e42020"/><path d="M298,416.6 l-3.3,-3 v1.6 h-3.3 v2.8 h3.3 v1.6 z" fill="#2ea82e"/><rect x="302" y="129" width="454" height="17" fill="#f0f0f0"/><rect x="302" y="129" width="454" height="1" fill="#fff"/><rect x="305" y="131.5" width="13" height="11.5" fill="#c6dff5" stroke="#a8c8e8" stroke-width="0.6"/><path d="M308.5,134 L314,137.5 L308.5,141 z" fill="#22c022"/><rect x="320.5" y="134" width="2.5" height="7" fill="#e03030"/><rect x="324.5" y="134" width="2.5" height="7" fill="#e03030"/><rect x="336.5" y="134" width="9" height="7" fill="#b8d8f4" stroke="#5a5a50" stroke-width="0.9" rx="0.8"/><rect x="339.8" y="134.5" width="2.6" height="6" fill="#fff2b0"/><path d="M337.3,137.5 l2,-1.6 v3.2 z M344.7,137.5 l-2,-1.6 v3.2 z" fill="#10208a"/><rect x="349.5" y="134" width="9" height="7" fill="#fff0b8" stroke="#5a5a50" stroke-width="0.9" rx="0.8"/><rect x="352.6" y="134.5" width="2.8" height="6" fill="#b8d8f4"/><path d="M352.4,137.5 l-2,-1.6 v3.2 z M355.6,137.5 l2,-1.6 v3.2 z" fill="#10208a"/><rect x="362.5" y="134" width="8.5" height="7" fill="#fff" stroke="#707070" stroke-width="0.9"/><path d="M364.5,138.5 l1.5,-1.5 h1.5 M368.5,136 v2.5 h-1.5" fill="none" stroke="#333" stroke-width="0.8"/><circle cx="385.5" cy="137.8" r="3.6" fill="#8ab0d8" stroke="#5a6a80" stroke-width="0.6"/><path d="M384,141.5 a3.8,3.8 0 0,1 -1.5,-6.5" fill="none" stroke="#18a018" stroke-width="1.8"/><rect x="393" y="134" width="6" height="4" fill="#d8e8f8" stroke="#a0a8b0" stroke-width="0.6"/><rect x="392" y="137.5" width="8.5" height="4.5" fill="#b0b0b0" rx="1.2"/><rect x="409.5" y="133.5" width="8.5" height="8" fill="#fbf0b8" stroke="#8a8a80" stroke-width="0.8"/><path d="M413.7,134 v7" stroke="#a09870" stroke-width="0.7" stroke-dasharray="1,0.8"/><path d="M422,134.5 v7 h7.5" fill="none" stroke="#777" stroke-width="0.8"/><path d="M422,134.5 l2,-1 h3" fill="none" stroke="#999" stroke-width="0.6"/><circle cx="427.3" cy="136.5" r="2.8" fill="#a8d0f0" stroke="#6890b0" stroke-width="0.6"/><circle cx="430" cy="139.5" r="0.9" fill="#e03030"/><line x1="435.3" y1="132.5" x2="435.3" y2="142.5" stroke="#555" stroke-width="0.7"/><circle cx="440.5" cy="136.2" r="2.7" fill="#b0d8f4" stroke="#7090b0" stroke-width="0.6"/><path d="M440.5,139 v3" stroke="#666" stroke-width="0.9"/><circle cx="443.3" cy="139.3" r="0.8" fill="#40b040"/><path d="M448,134 h2 l-2,3 h2" fill="none" stroke="#999" stroke-width="0.6"/><circle cx="453.5" cy="136.3" r="2.5" fill="#f4f8fc" stroke="#b0b8c0" stroke-width="0.6"/><path d="M455,138.5 l2,2.5" stroke="#aaa" stroke-width="0.9"/><circle cx="466.3" cy="136.3" r="2.6" fill="#f0f4f8" stroke="#c0c4c8" stroke-width="0.6"/><path d="M467.5,138.5 v3" stroke="#aaa" stroke-width="0.9"/><path d="M476,133.5 v8 l2,-2 l1.5,2.8 l1,-0.5 l-1.4,-2.8 h2.6 z" fill="#101838"/><path d="M492,137 a3,3 0 0,1 5,-2.2 M497.5,139 a3,3 0 0,1 -5,2.2" fill="none" stroke="#18a018" stroke-width="1.8"/><circle cx="508" cy="138.5" r="3.8" fill="#d0e4f4" stroke="#90a8c0" stroke-width="0.5"/><path d="M504.5,139.5 q3.5,-3 7,-1.5" fill="none" stroke="#2050c0" stroke-width="1.3"/><rect x="514.5" y="131.5" width="13" height="12" fill="#c6e0f6" stroke="#a8cae8" stroke-width="0.6"/><rect x="517" y="134" width="8" height="7.5" fill="#f8ecb8" stroke="#908870" stroke-width="0.6"/><path d="M521,134 v7.5 M517,137.7 h8" stroke="#6a5a40" stroke-width="0.6" stroke-dasharray="1,0.7"/><path d="M532,134.5 l6,6.5 M532,141 l6,-6.5" stroke="#a8a8a8" stroke-width="1.1"/><path d="M543,135.5 h8 M543,137.5 h8 M543,139.5 h8" stroke="#b0b0b0" stroke-width="0.9"/><path d="M545,138.5 h4" stroke="#666" stroke-width="0.9"/><rect x="556" y="134" width="6" height="8" fill="#a8c8e8" stroke="#7088a8" stroke-width="0.6"/><path d="M562,133 l0.6,1.5 1.5,0.2 -1.1,1 0.3,1.5 -1.3,-0.8 -1.3,0.8 0.3,-1.5 -1.1,-1 1.5,-0.2 z" fill="#30b030"/><path d="M458.1,38.6 C460,37 460.6,33.5 461,31 C461.6,28 463,26.4 464.5,26.4 C466,26.4 467.4,28 468,31 C468.4,33.5 469,37 471.8,38.6 Z" fill="none" stroke="#b0b0b0" stroke-width="0.8"/><path d="M463.3,38.8 a1.2,1 0 0,0 2.4,0" fill="none" stroke="#b0b0b0" stroke-width="0.8"/><ellipse cx="472.9" cy="26.7" rx="6.1" ry="5.7" fill="#dc2020"/><text x="472.3" y="29.2" text-anchor="middle" fill="#f4e8e8" font-size="8" font-family="Liberation Sans" textLength="8.6" lengthAdjust="spacingAndGlyphs">02</text><path d="M496.5,28 V40.4 H512" fill="none" stroke="#d8d8d8" stroke-width="1.1"/><path d="M499,37 L503.5,32 L506.5,34.5 L511,29.5" fill="none" stroke="#d8d8d8" stroke-width="1.1"/><path d="M508,29.3 H511.2 V32.5" fill="none" stroke="#d8d8d8" stroke-width="1.1"/><path d="M497,54 L504,48 L511,54 Z" fill="#2d2d2d"/><path d="M538,28.3 V39.7 H546 M538,30.6 H551.2 M551.2,28.2 V34 M538,28.3 H539.3" fill="none" stroke="#b4b4b4" stroke-width="0.9"/><path d="M541.5,26.6 V30 M544.5,26.6 V30 M547.5,26.6 V30" stroke="#b4b4b4" stroke-width="0.9"/><circle cx="549.6" cy="37.2" r="3.4" fill="#3d3d3d" stroke="#b4b4b4" stroke-width="0.9"/><path d="M549.3,35.3 V37.6 H551" fill="none" stroke="#b4b4b4" stroke-width="0.7"/><path d="M578.2,26.2 H586 L589.5,29.7 V41.8 H578.2 Z" fill="none" stroke="#b4b4b4" stroke-width="0.75"/><path d="M586,26.2 V29.7 H589.5 Z" fill="#b4b4b4" opacity="0.8"/><path d="M583,32.3 A3.3,3.3 0 1,0 586.3,35.6 H583 Z" fill="none" stroke="#b4b4b4" stroke-width="0.75"/><path d="M584.2,31.3 V34.4 H587.3 A3.1,3.1 0 0,0 584.2,31.3 Z" fill="none" stroke="#b4b4b4" stroke-width="0.75"/><circle cx="623.8" cy="33.6" r="7.2" fill="none" stroke="#b4b4b4" stroke-width="0.8"/><path d="M622.6,32.6 H624.3 L622.9,37.2 M621.8,37.3 H624.2" fill="none" stroke="#b4b4b4" stroke-width="1.1"/><circle cx="624.9" cy="30.5" r="0.9" fill="#b4b4b4"/><path d="M725.3,29.6 V25.3 H735.8 V29.6" fill="none" stroke="#b4b4b4" stroke-width="0.75"/><path d="M726,37.5 H723.8 Q722.4,37.5 722.4,36.1 V31 Q722.4,29.6 723.8,29.6 H737.6 Q739,29.6 739,31 V36.1 Q739,37.5 737.6,37.5 H735.2" fill="none" stroke="#b4b4b4" stroke-width="0.75"/><rect x="726.1" y="34.1" width="9" height="7.9" fill="#3d3d3d" stroke="#b4b4b4" stroke-width="0.75"/><path d="M727.8,36.6 H733.4 M727.8,39 H733.4" stroke="#b4b4b4" stroke-width="0.6"/><circle cx="737" cy="31.3" r="0.4" fill="#b4b4b4"/><path d="M749,40.8 L750.2,38.7 C747.5,37.5 746,35.4 746,33.1 C746,29.5 749.7,26.7 754.3,26.7 C758.9,26.7 762.6,29.5 762.6,33.1 C762.6,36.7 758.9,39.5 754.3,39.5 C752.9,39.5 751.5,39.2 750.2,38.7" fill="none" stroke="#b4b4b4" stroke-width="0.75"/><text x="749.3" y="36.3" fill="#b4b4b4" font-size="6.5" font-family="Liberation Sans">A</text><text x="754.8" y="36.3" fill="#b4b4b4" font-size="6" font-family="Liberation Sans">Z</text><path d="M754.6,29.6 h3.8" stroke="#b4b4b4" stroke-width="0.6"/><circle cx="18.2" cy="75.3" r="10" fill="none" stroke="#e4e4e4" stroke-width="1"/><path d="M11.2,81 Q13.3,79.2 15.8,78.5 Q16.5,78.2 16.3,77.2 Q14.7,75.2 14.7,72.6 Q14.7,69 18.2,69 Q21.7,69 21.7,72.6 Q21.7,75.2 20.1,77.2 Q19.9,78.2 20.6,78.5 Q23.1,79.2 25.2,81" fill="none" stroke="#e4e4e4" stroke-width="1"/><path d="M10.2,107.2 L18.1,99.3 L20.7,101.8 V100.2 H23.7 V104.8 L26.4,107.4 M12.3,105.4 V113.6 H16.5 V109.4 H20.2 V113.6 H24.6 V105.4" fill="none" stroke="#ececec" stroke-width="1"/><rect x="147" y="139" width="5.5" height="5.5" fill="#e8e8e8"/><path d="M148,141.75 h3.5" stroke="#333" stroke-width="0.9"/><path d="M160.5,148.4 V174.7" stroke="#6a6a6a" stroke-width="0.7"/><path d="M152.5,141.5 h2 M163,158 h2 M163,174.5 h2" stroke="#555" stroke-width="0.6"/><rect x="158" y="155.6" width="5.2" height="5.2" fill="#e8e8e8"/><path d="M159,158.2 h3.2 M160.6,156.6 v3.2" stroke="#333" stroke-width="0.8"/><rect x="158" y="172.2" width="5.2" height="5.2" fill="#e8e8e8"/><path d="M159,174.79999999999998 h3.2 M160.6,173.2 v3.2" stroke="#333" stroke-width="0.8"/><path d="M69.4,27 H114.8 Q117,27 117,29.2 V42.8 Q117,45 114.8,45 H61.5 Z" fill="#fff" stroke="#d9231f" stroke-width="0.9"/><path d="M19,21 H70.6 L67.7,41.2 H19 Q16.5,41.2 16.5,38.7 V23.5 Q16.5,21 19,21 Z" fill="#d9231f"/><rect x="2.5" y="2" width="8" height="7.5" fill="#c8c8c8"/><rect x="1.2" y="3" width="7" height="7" fill="#e01818"/><rect x="5.5" y="3.5" width="3" height="6" fill="#f08080"/><path d="M732.5,5.5 H738.5" stroke="#333" stroke-width="1"/><rect x="758.5" y="4.5" width="5" height="4.5" fill="none" stroke="#333" stroke-width="0.9"/><path d="M760,4.5 V3 H765 V7.5 H763.5" fill="none" stroke="#333" stroke-width="0.9"/><path d="M783.5,3 L789,8.5 M789,3 L783.5,8.5" stroke="#c8c8c8" stroke-width="0.9"/></svg>
<div class="t" style="left:18.5px;top:25.15px;font-size:16.6px;color:#fff;font-weight:700;letter-spacing:-0.2px;">PcVue</div>
<div class="t" style="left:70.3px;top:31.17px;font-size:11.5px;color:#d9231f;font-weight:700;font-style:italic;transform:scaleX(0.83);transform-origin:0 0;">Solutions</div>
</body></html>
